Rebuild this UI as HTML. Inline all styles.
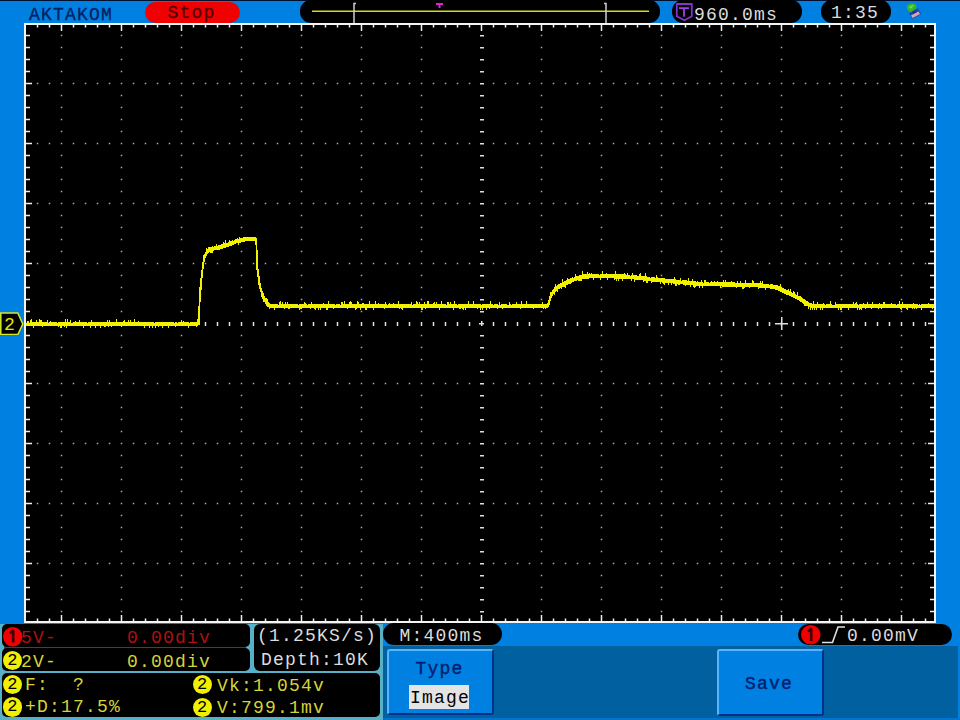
<!DOCTYPE html>
<html><head><meta charset="utf-8"><style>
html,body{margin:0;padding:0}
body{width:960px;height:720px;position:relative;overflow:hidden;background:#0080e0;font-family:"Liberation Mono",monospace}
.a{position:absolute}
.t{position:absolute;font-size:18px;letter-spacing:1.2px;line-height:20px;white-space:pre}
.pill{position:absolute;background:#000;}
.c{position:absolute;border-radius:50%;text-align:center;color:#000;font-family:"Liberation Mono",monospace}
</style></head><body>
<div class="a" style="left:0;top:0;width:960px;height:1px;background:#001030"></div>
<div class="t" style="left:29px;top:5px;color:#002060;-webkit-text-stroke:0.3px #002060">AKTAKOM</div>
<div class="pill" style="left:144.5px;top:1.5px;width:95.5px;height:21.5px;border-radius:11px;background:#f00000"></div>
<div class="t" style="left:167.5px;top:3px;color:#500000;-webkit-text-stroke:0.3px #500000">Stop</div>
<div class="pill" style="left:300px;top:0;width:360px;height:22.5px;border-radius:11px"></div>
<div class="pill" style="left:672px;top:0;width:130px;height:22.5px;border-radius:11px"></div>
<div class="pill" style="left:821px;top:0;width:70px;height:22.5px;border-radius:11px"></div>
<svg width="960" height="720" style="position:absolute;left:0;top:0">
<rect x="24" y="23" width="912" height="600" fill="#f4f4f4"/>
<rect x="26" y="25" width="908" height="596" fill="#000"/>
<path d="M60.75 34.75h1.5v1.5h-1.5zM60.75 46.75h1.5v1.5h-1.5zM60.75 58.75h1.5v1.5h-1.5zM60.75 70.75h1.5v1.5h-1.5zM60.75 82.75h1.5v1.5h-1.5zM60.75 94.75h1.5v1.5h-1.5zM60.75 106.75h1.5v1.5h-1.5zM60.75 118.75h1.5v1.5h-1.5zM60.75 130.75h1.5v1.5h-1.5zM60.75 142.75h1.5v1.5h-1.5zM60.75 154.75h1.5v1.5h-1.5zM60.75 166.75h1.5v1.5h-1.5zM60.75 178.75h1.5v1.5h-1.5zM60.75 190.75h1.5v1.5h-1.5zM60.75 202.75h1.5v1.5h-1.5zM60.75 214.75h1.5v1.5h-1.5zM60.75 226.75h1.5v1.5h-1.5zM60.75 238.75h1.5v1.5h-1.5zM60.75 250.75h1.5v1.5h-1.5zM60.75 262.75h1.5v1.5h-1.5zM60.75 274.75h1.5v1.5h-1.5zM60.75 286.75h1.5v1.5h-1.5zM60.75 298.75h1.5v1.5h-1.5zM60.75 310.75h1.5v1.5h-1.5zM60.75 334.75h1.5v1.5h-1.5zM60.75 346.75h1.5v1.5h-1.5zM60.75 358.75h1.5v1.5h-1.5zM60.75 370.75h1.5v1.5h-1.5zM60.75 382.75h1.5v1.5h-1.5zM60.75 394.75h1.5v1.5h-1.5zM60.75 406.75h1.5v1.5h-1.5zM60.75 418.75h1.5v1.5h-1.5zM60.75 430.75h1.5v1.5h-1.5zM60.75 442.75h1.5v1.5h-1.5zM60.75 454.75h1.5v1.5h-1.5zM60.75 466.75h1.5v1.5h-1.5zM60.75 478.75h1.5v1.5h-1.5zM60.75 490.75h1.5v1.5h-1.5zM60.75 502.75h1.5v1.5h-1.5zM60.75 514.75h1.5v1.5h-1.5zM60.75 526.75h1.5v1.5h-1.5zM60.75 538.75h1.5v1.5h-1.5zM60.75 550.75h1.5v1.5h-1.5zM60.75 562.75h1.5v1.5h-1.5zM60.75 574.75h1.5v1.5h-1.5zM60.75 586.75h1.5v1.5h-1.5zM60.75 598.75h1.5v1.5h-1.5zM60.75 610.75h1.5v1.5h-1.5zM120.75 34.75h1.5v1.5h-1.5zM120.75 46.75h1.5v1.5h-1.5zM120.75 58.75h1.5v1.5h-1.5zM120.75 70.75h1.5v1.5h-1.5zM120.75 82.75h1.5v1.5h-1.5zM120.75 94.75h1.5v1.5h-1.5zM120.75 106.75h1.5v1.5h-1.5zM120.75 118.75h1.5v1.5h-1.5zM120.75 130.75h1.5v1.5h-1.5zM120.75 142.75h1.5v1.5h-1.5zM120.75 154.75h1.5v1.5h-1.5zM120.75 166.75h1.5v1.5h-1.5zM120.75 178.75h1.5v1.5h-1.5zM120.75 190.75h1.5v1.5h-1.5zM120.75 202.75h1.5v1.5h-1.5zM120.75 214.75h1.5v1.5h-1.5zM120.75 226.75h1.5v1.5h-1.5zM120.75 238.75h1.5v1.5h-1.5zM120.75 250.75h1.5v1.5h-1.5zM120.75 262.75h1.5v1.5h-1.5zM120.75 274.75h1.5v1.5h-1.5zM120.75 286.75h1.5v1.5h-1.5zM120.75 298.75h1.5v1.5h-1.5zM120.75 310.75h1.5v1.5h-1.5zM120.75 334.75h1.5v1.5h-1.5zM120.75 346.75h1.5v1.5h-1.5zM120.75 358.75h1.5v1.5h-1.5zM120.75 370.75h1.5v1.5h-1.5zM120.75 382.75h1.5v1.5h-1.5zM120.75 394.75h1.5v1.5h-1.5zM120.75 406.75h1.5v1.5h-1.5zM120.75 418.75h1.5v1.5h-1.5zM120.75 430.75h1.5v1.5h-1.5zM120.75 442.75h1.5v1.5h-1.5zM120.75 454.75h1.5v1.5h-1.5zM120.75 466.75h1.5v1.5h-1.5zM120.75 478.75h1.5v1.5h-1.5zM120.75 490.75h1.5v1.5h-1.5zM120.75 502.75h1.5v1.5h-1.5zM120.75 514.75h1.5v1.5h-1.5zM120.75 526.75h1.5v1.5h-1.5zM120.75 538.75h1.5v1.5h-1.5zM120.75 550.75h1.5v1.5h-1.5zM120.75 562.75h1.5v1.5h-1.5zM120.75 574.75h1.5v1.5h-1.5zM120.75 586.75h1.5v1.5h-1.5zM120.75 598.75h1.5v1.5h-1.5zM120.75 610.75h1.5v1.5h-1.5zM180.75 34.75h1.5v1.5h-1.5zM180.75 46.75h1.5v1.5h-1.5zM180.75 58.75h1.5v1.5h-1.5zM180.75 70.75h1.5v1.5h-1.5zM180.75 82.75h1.5v1.5h-1.5zM180.75 94.75h1.5v1.5h-1.5zM180.75 106.75h1.5v1.5h-1.5zM180.75 118.75h1.5v1.5h-1.5zM180.75 130.75h1.5v1.5h-1.5zM180.75 142.75h1.5v1.5h-1.5zM180.75 154.75h1.5v1.5h-1.5zM180.75 166.75h1.5v1.5h-1.5zM180.75 178.75h1.5v1.5h-1.5zM180.75 190.75h1.5v1.5h-1.5zM180.75 202.75h1.5v1.5h-1.5zM180.75 214.75h1.5v1.5h-1.5zM180.75 226.75h1.5v1.5h-1.5zM180.75 238.75h1.5v1.5h-1.5zM180.75 250.75h1.5v1.5h-1.5zM180.75 262.75h1.5v1.5h-1.5zM180.75 274.75h1.5v1.5h-1.5zM180.75 286.75h1.5v1.5h-1.5zM180.75 298.75h1.5v1.5h-1.5zM180.75 310.75h1.5v1.5h-1.5zM180.75 334.75h1.5v1.5h-1.5zM180.75 346.75h1.5v1.5h-1.5zM180.75 358.75h1.5v1.5h-1.5zM180.75 370.75h1.5v1.5h-1.5zM180.75 382.75h1.5v1.5h-1.5zM180.75 394.75h1.5v1.5h-1.5zM180.75 406.75h1.5v1.5h-1.5zM180.75 418.75h1.5v1.5h-1.5zM180.75 430.75h1.5v1.5h-1.5zM180.75 442.75h1.5v1.5h-1.5zM180.75 454.75h1.5v1.5h-1.5zM180.75 466.75h1.5v1.5h-1.5zM180.75 478.75h1.5v1.5h-1.5zM180.75 490.75h1.5v1.5h-1.5zM180.75 502.75h1.5v1.5h-1.5zM180.75 514.75h1.5v1.5h-1.5zM180.75 526.75h1.5v1.5h-1.5zM180.75 538.75h1.5v1.5h-1.5zM180.75 550.75h1.5v1.5h-1.5zM180.75 562.75h1.5v1.5h-1.5zM180.75 574.75h1.5v1.5h-1.5zM180.75 586.75h1.5v1.5h-1.5zM180.75 598.75h1.5v1.5h-1.5zM180.75 610.75h1.5v1.5h-1.5zM240.75 34.75h1.5v1.5h-1.5zM240.75 46.75h1.5v1.5h-1.5zM240.75 58.75h1.5v1.5h-1.5zM240.75 70.75h1.5v1.5h-1.5zM240.75 82.75h1.5v1.5h-1.5zM240.75 94.75h1.5v1.5h-1.5zM240.75 106.75h1.5v1.5h-1.5zM240.75 118.75h1.5v1.5h-1.5zM240.75 130.75h1.5v1.5h-1.5zM240.75 142.75h1.5v1.5h-1.5zM240.75 154.75h1.5v1.5h-1.5zM240.75 166.75h1.5v1.5h-1.5zM240.75 178.75h1.5v1.5h-1.5zM240.75 190.75h1.5v1.5h-1.5zM240.75 202.75h1.5v1.5h-1.5zM240.75 214.75h1.5v1.5h-1.5zM240.75 226.75h1.5v1.5h-1.5zM240.75 238.75h1.5v1.5h-1.5zM240.75 250.75h1.5v1.5h-1.5zM240.75 262.75h1.5v1.5h-1.5zM240.75 274.75h1.5v1.5h-1.5zM240.75 286.75h1.5v1.5h-1.5zM240.75 298.75h1.5v1.5h-1.5zM240.75 310.75h1.5v1.5h-1.5zM240.75 334.75h1.5v1.5h-1.5zM240.75 346.75h1.5v1.5h-1.5zM240.75 358.75h1.5v1.5h-1.5zM240.75 370.75h1.5v1.5h-1.5zM240.75 382.75h1.5v1.5h-1.5zM240.75 394.75h1.5v1.5h-1.5zM240.75 406.75h1.5v1.5h-1.5zM240.75 418.75h1.5v1.5h-1.5zM240.75 430.75h1.5v1.5h-1.5zM240.75 442.75h1.5v1.5h-1.5zM240.75 454.75h1.5v1.5h-1.5zM240.75 466.75h1.5v1.5h-1.5zM240.75 478.75h1.5v1.5h-1.5zM240.75 490.75h1.5v1.5h-1.5zM240.75 502.75h1.5v1.5h-1.5zM240.75 514.75h1.5v1.5h-1.5zM240.75 526.75h1.5v1.5h-1.5zM240.75 538.75h1.5v1.5h-1.5zM240.75 550.75h1.5v1.5h-1.5zM240.75 562.75h1.5v1.5h-1.5zM240.75 574.75h1.5v1.5h-1.5zM240.75 586.75h1.5v1.5h-1.5zM240.75 598.75h1.5v1.5h-1.5zM240.75 610.75h1.5v1.5h-1.5zM300.75 34.75h1.5v1.5h-1.5zM300.75 46.75h1.5v1.5h-1.5zM300.75 58.75h1.5v1.5h-1.5zM300.75 70.75h1.5v1.5h-1.5zM300.75 82.75h1.5v1.5h-1.5zM300.75 94.75h1.5v1.5h-1.5zM300.75 106.75h1.5v1.5h-1.5zM300.75 118.75h1.5v1.5h-1.5zM300.75 130.75h1.5v1.5h-1.5zM300.75 142.75h1.5v1.5h-1.5zM300.75 154.75h1.5v1.5h-1.5zM300.75 166.75h1.5v1.5h-1.5zM300.75 178.75h1.5v1.5h-1.5zM300.75 190.75h1.5v1.5h-1.5zM300.75 202.75h1.5v1.5h-1.5zM300.75 214.75h1.5v1.5h-1.5zM300.75 226.75h1.5v1.5h-1.5zM300.75 238.75h1.5v1.5h-1.5zM300.75 250.75h1.5v1.5h-1.5zM300.75 262.75h1.5v1.5h-1.5zM300.75 274.75h1.5v1.5h-1.5zM300.75 286.75h1.5v1.5h-1.5zM300.75 298.75h1.5v1.5h-1.5zM300.75 310.75h1.5v1.5h-1.5zM300.75 334.75h1.5v1.5h-1.5zM300.75 346.75h1.5v1.5h-1.5zM300.75 358.75h1.5v1.5h-1.5zM300.75 370.75h1.5v1.5h-1.5zM300.75 382.75h1.5v1.5h-1.5zM300.75 394.75h1.5v1.5h-1.5zM300.75 406.75h1.5v1.5h-1.5zM300.75 418.75h1.5v1.5h-1.5zM300.75 430.75h1.5v1.5h-1.5zM300.75 442.75h1.5v1.5h-1.5zM300.75 454.75h1.5v1.5h-1.5zM300.75 466.75h1.5v1.5h-1.5zM300.75 478.75h1.5v1.5h-1.5zM300.75 490.75h1.5v1.5h-1.5zM300.75 502.75h1.5v1.5h-1.5zM300.75 514.75h1.5v1.5h-1.5zM300.75 526.75h1.5v1.5h-1.5zM300.75 538.75h1.5v1.5h-1.5zM300.75 550.75h1.5v1.5h-1.5zM300.75 562.75h1.5v1.5h-1.5zM300.75 574.75h1.5v1.5h-1.5zM300.75 586.75h1.5v1.5h-1.5zM300.75 598.75h1.5v1.5h-1.5zM300.75 610.75h1.5v1.5h-1.5zM360.75 34.75h1.5v1.5h-1.5zM360.75 46.75h1.5v1.5h-1.5zM360.75 58.75h1.5v1.5h-1.5zM360.75 70.75h1.5v1.5h-1.5zM360.75 82.75h1.5v1.5h-1.5zM360.75 94.75h1.5v1.5h-1.5zM360.75 106.75h1.5v1.5h-1.5zM360.75 118.75h1.5v1.5h-1.5zM360.75 130.75h1.5v1.5h-1.5zM360.75 142.75h1.5v1.5h-1.5zM360.75 154.75h1.5v1.5h-1.5zM360.75 166.75h1.5v1.5h-1.5zM360.75 178.75h1.5v1.5h-1.5zM360.75 190.75h1.5v1.5h-1.5zM360.75 202.75h1.5v1.5h-1.5zM360.75 214.75h1.5v1.5h-1.5zM360.75 226.75h1.5v1.5h-1.5zM360.75 238.75h1.5v1.5h-1.5zM360.75 250.75h1.5v1.5h-1.5zM360.75 262.75h1.5v1.5h-1.5zM360.75 274.75h1.5v1.5h-1.5zM360.75 286.75h1.5v1.5h-1.5zM360.75 298.75h1.5v1.5h-1.5zM360.75 310.75h1.5v1.5h-1.5zM360.75 334.75h1.5v1.5h-1.5zM360.75 346.75h1.5v1.5h-1.5zM360.75 358.75h1.5v1.5h-1.5zM360.75 370.75h1.5v1.5h-1.5zM360.75 382.75h1.5v1.5h-1.5zM360.75 394.75h1.5v1.5h-1.5zM360.75 406.75h1.5v1.5h-1.5zM360.75 418.75h1.5v1.5h-1.5zM360.75 430.75h1.5v1.5h-1.5zM360.75 442.75h1.5v1.5h-1.5zM360.75 454.75h1.5v1.5h-1.5zM360.75 466.75h1.5v1.5h-1.5zM360.75 478.75h1.5v1.5h-1.5zM360.75 490.75h1.5v1.5h-1.5zM360.75 502.75h1.5v1.5h-1.5zM360.75 514.75h1.5v1.5h-1.5zM360.75 526.75h1.5v1.5h-1.5zM360.75 538.75h1.5v1.5h-1.5zM360.75 550.75h1.5v1.5h-1.5zM360.75 562.75h1.5v1.5h-1.5zM360.75 574.75h1.5v1.5h-1.5zM360.75 586.75h1.5v1.5h-1.5zM360.75 598.75h1.5v1.5h-1.5zM360.75 610.75h1.5v1.5h-1.5zM420.75 34.75h1.5v1.5h-1.5zM420.75 46.75h1.5v1.5h-1.5zM420.75 58.75h1.5v1.5h-1.5zM420.75 70.75h1.5v1.5h-1.5zM420.75 82.75h1.5v1.5h-1.5zM420.75 94.75h1.5v1.5h-1.5zM420.75 106.75h1.5v1.5h-1.5zM420.75 118.75h1.5v1.5h-1.5zM420.75 130.75h1.5v1.5h-1.5zM420.75 142.75h1.5v1.5h-1.5zM420.75 154.75h1.5v1.5h-1.5zM420.75 166.75h1.5v1.5h-1.5zM420.75 178.75h1.5v1.5h-1.5zM420.75 190.75h1.5v1.5h-1.5zM420.75 202.75h1.5v1.5h-1.5zM420.75 214.75h1.5v1.5h-1.5zM420.75 226.75h1.5v1.5h-1.5zM420.75 238.75h1.5v1.5h-1.5zM420.75 250.75h1.5v1.5h-1.5zM420.75 262.75h1.5v1.5h-1.5zM420.75 274.75h1.5v1.5h-1.5zM420.75 286.75h1.5v1.5h-1.5zM420.75 298.75h1.5v1.5h-1.5zM420.75 310.75h1.5v1.5h-1.5zM420.75 334.75h1.5v1.5h-1.5zM420.75 346.75h1.5v1.5h-1.5zM420.75 358.75h1.5v1.5h-1.5zM420.75 370.75h1.5v1.5h-1.5zM420.75 382.75h1.5v1.5h-1.5zM420.75 394.75h1.5v1.5h-1.5zM420.75 406.75h1.5v1.5h-1.5zM420.75 418.75h1.5v1.5h-1.5zM420.75 430.75h1.5v1.5h-1.5zM420.75 442.75h1.5v1.5h-1.5zM420.75 454.75h1.5v1.5h-1.5zM420.75 466.75h1.5v1.5h-1.5zM420.75 478.75h1.5v1.5h-1.5zM420.75 490.75h1.5v1.5h-1.5zM420.75 502.75h1.5v1.5h-1.5zM420.75 514.75h1.5v1.5h-1.5zM420.75 526.75h1.5v1.5h-1.5zM420.75 538.75h1.5v1.5h-1.5zM420.75 550.75h1.5v1.5h-1.5zM420.75 562.75h1.5v1.5h-1.5zM420.75 574.75h1.5v1.5h-1.5zM420.75 586.75h1.5v1.5h-1.5zM420.75 598.75h1.5v1.5h-1.5zM420.75 610.75h1.5v1.5h-1.5zM540.75 34.75h1.5v1.5h-1.5zM540.75 46.75h1.5v1.5h-1.5zM540.75 58.75h1.5v1.5h-1.5zM540.75 70.75h1.5v1.5h-1.5zM540.75 82.75h1.5v1.5h-1.5zM540.75 94.75h1.5v1.5h-1.5zM540.75 106.75h1.5v1.5h-1.5zM540.75 118.75h1.5v1.5h-1.5zM540.75 130.75h1.5v1.5h-1.5zM540.75 142.75h1.5v1.5h-1.5zM540.75 154.75h1.5v1.5h-1.5zM540.75 166.75h1.5v1.5h-1.5zM540.75 178.75h1.5v1.5h-1.5zM540.75 190.75h1.5v1.5h-1.5zM540.75 202.75h1.5v1.5h-1.5zM540.75 214.75h1.5v1.5h-1.5zM540.75 226.75h1.5v1.5h-1.5zM540.75 238.75h1.5v1.5h-1.5zM540.75 250.75h1.5v1.5h-1.5zM540.75 262.75h1.5v1.5h-1.5zM540.75 274.75h1.5v1.5h-1.5zM540.75 286.75h1.5v1.5h-1.5zM540.75 298.75h1.5v1.5h-1.5zM540.75 310.75h1.5v1.5h-1.5zM540.75 334.75h1.5v1.5h-1.5zM540.75 346.75h1.5v1.5h-1.5zM540.75 358.75h1.5v1.5h-1.5zM540.75 370.75h1.5v1.5h-1.5zM540.75 382.75h1.5v1.5h-1.5zM540.75 394.75h1.5v1.5h-1.5zM540.75 406.75h1.5v1.5h-1.5zM540.75 418.75h1.5v1.5h-1.5zM540.75 430.75h1.5v1.5h-1.5zM540.75 442.75h1.5v1.5h-1.5zM540.75 454.75h1.5v1.5h-1.5zM540.75 466.75h1.5v1.5h-1.5zM540.75 478.75h1.5v1.5h-1.5zM540.75 490.75h1.5v1.5h-1.5zM540.75 502.75h1.5v1.5h-1.5zM540.75 514.75h1.5v1.5h-1.5zM540.75 526.75h1.5v1.5h-1.5zM540.75 538.75h1.5v1.5h-1.5zM540.75 550.75h1.5v1.5h-1.5zM540.75 562.75h1.5v1.5h-1.5zM540.75 574.75h1.5v1.5h-1.5zM540.75 586.75h1.5v1.5h-1.5zM540.75 598.75h1.5v1.5h-1.5zM540.75 610.75h1.5v1.5h-1.5zM600.75 34.75h1.5v1.5h-1.5zM600.75 46.75h1.5v1.5h-1.5zM600.75 58.75h1.5v1.5h-1.5zM600.75 70.75h1.5v1.5h-1.5zM600.75 82.75h1.5v1.5h-1.5zM600.75 94.75h1.5v1.5h-1.5zM600.75 106.75h1.5v1.5h-1.5zM600.75 118.75h1.5v1.5h-1.5zM600.75 130.75h1.5v1.5h-1.5zM600.75 142.75h1.5v1.5h-1.5zM600.75 154.75h1.5v1.5h-1.5zM600.75 166.75h1.5v1.5h-1.5zM600.75 178.75h1.5v1.5h-1.5zM600.75 190.75h1.5v1.5h-1.5zM600.75 202.75h1.5v1.5h-1.5zM600.75 214.75h1.5v1.5h-1.5zM600.75 226.75h1.5v1.5h-1.5zM600.75 238.75h1.5v1.5h-1.5zM600.75 250.75h1.5v1.5h-1.5zM600.75 262.75h1.5v1.5h-1.5zM600.75 274.75h1.5v1.5h-1.5zM600.75 286.75h1.5v1.5h-1.5zM600.75 298.75h1.5v1.5h-1.5zM600.75 310.75h1.5v1.5h-1.5zM600.75 334.75h1.5v1.5h-1.5zM600.75 346.75h1.5v1.5h-1.5zM600.75 358.75h1.5v1.5h-1.5zM600.75 370.75h1.5v1.5h-1.5zM600.75 382.75h1.5v1.5h-1.5zM600.75 394.75h1.5v1.5h-1.5zM600.75 406.75h1.5v1.5h-1.5zM600.75 418.75h1.5v1.5h-1.5zM600.75 430.75h1.5v1.5h-1.5zM600.75 442.75h1.5v1.5h-1.5zM600.75 454.75h1.5v1.5h-1.5zM600.75 466.75h1.5v1.5h-1.5zM600.75 478.75h1.5v1.5h-1.5zM600.75 490.75h1.5v1.5h-1.5zM600.75 502.75h1.5v1.5h-1.5zM600.75 514.75h1.5v1.5h-1.5zM600.75 526.75h1.5v1.5h-1.5zM600.75 538.75h1.5v1.5h-1.5zM600.75 550.75h1.5v1.5h-1.5zM600.75 562.75h1.5v1.5h-1.5zM600.75 574.75h1.5v1.5h-1.5zM600.75 586.75h1.5v1.5h-1.5zM600.75 598.75h1.5v1.5h-1.5zM600.75 610.75h1.5v1.5h-1.5zM660.75 34.75h1.5v1.5h-1.5zM660.75 46.75h1.5v1.5h-1.5zM660.75 58.75h1.5v1.5h-1.5zM660.75 70.75h1.5v1.5h-1.5zM660.75 82.75h1.5v1.5h-1.5zM660.75 94.75h1.5v1.5h-1.5zM660.75 106.75h1.5v1.5h-1.5zM660.75 118.75h1.5v1.5h-1.5zM660.75 130.75h1.5v1.5h-1.5zM660.75 142.75h1.5v1.5h-1.5zM660.75 154.75h1.5v1.5h-1.5zM660.75 166.75h1.5v1.5h-1.5zM660.75 178.75h1.5v1.5h-1.5zM660.75 190.75h1.5v1.5h-1.5zM660.75 202.75h1.5v1.5h-1.5zM660.75 214.75h1.5v1.5h-1.5zM660.75 226.75h1.5v1.5h-1.5zM660.75 238.75h1.5v1.5h-1.5zM660.75 250.75h1.5v1.5h-1.5zM660.75 262.75h1.5v1.5h-1.5zM660.75 274.75h1.5v1.5h-1.5zM660.75 286.75h1.5v1.5h-1.5zM660.75 298.75h1.5v1.5h-1.5zM660.75 310.75h1.5v1.5h-1.5zM660.75 334.75h1.5v1.5h-1.5zM660.75 346.75h1.5v1.5h-1.5zM660.75 358.75h1.5v1.5h-1.5zM660.75 370.75h1.5v1.5h-1.5zM660.75 382.75h1.5v1.5h-1.5zM660.75 394.75h1.5v1.5h-1.5zM660.75 406.75h1.5v1.5h-1.5zM660.75 418.75h1.5v1.5h-1.5zM660.75 430.75h1.5v1.5h-1.5zM660.75 442.75h1.5v1.5h-1.5zM660.75 454.75h1.5v1.5h-1.5zM660.75 466.75h1.5v1.5h-1.5zM660.75 478.75h1.5v1.5h-1.5zM660.75 490.75h1.5v1.5h-1.5zM660.75 502.75h1.5v1.5h-1.5zM660.75 514.75h1.5v1.5h-1.5zM660.75 526.75h1.5v1.5h-1.5zM660.75 538.75h1.5v1.5h-1.5zM660.75 550.75h1.5v1.5h-1.5zM660.75 562.75h1.5v1.5h-1.5zM660.75 574.75h1.5v1.5h-1.5zM660.75 586.75h1.5v1.5h-1.5zM660.75 598.75h1.5v1.5h-1.5zM660.75 610.75h1.5v1.5h-1.5zM720.75 34.75h1.5v1.5h-1.5zM720.75 46.75h1.5v1.5h-1.5zM720.75 58.75h1.5v1.5h-1.5zM720.75 70.75h1.5v1.5h-1.5zM720.75 82.75h1.5v1.5h-1.5zM720.75 94.75h1.5v1.5h-1.5zM720.75 106.75h1.5v1.5h-1.5zM720.75 118.75h1.5v1.5h-1.5zM720.75 130.75h1.5v1.5h-1.5zM720.75 142.75h1.5v1.5h-1.5zM720.75 154.75h1.5v1.5h-1.5zM720.75 166.75h1.5v1.5h-1.5zM720.75 178.75h1.5v1.5h-1.5zM720.75 190.75h1.5v1.5h-1.5zM720.75 202.75h1.5v1.5h-1.5zM720.75 214.75h1.5v1.5h-1.5zM720.75 226.75h1.5v1.5h-1.5zM720.75 238.75h1.5v1.5h-1.5zM720.75 250.75h1.5v1.5h-1.5zM720.75 262.75h1.5v1.5h-1.5zM720.75 274.75h1.5v1.5h-1.5zM720.75 286.75h1.5v1.5h-1.5zM720.75 298.75h1.5v1.5h-1.5zM720.75 310.75h1.5v1.5h-1.5zM720.75 334.75h1.5v1.5h-1.5zM720.75 346.75h1.5v1.5h-1.5zM720.75 358.75h1.5v1.5h-1.5zM720.75 370.75h1.5v1.5h-1.5zM720.75 382.75h1.5v1.5h-1.5zM720.75 394.75h1.5v1.5h-1.5zM720.75 406.75h1.5v1.5h-1.5zM720.75 418.75h1.5v1.5h-1.5zM720.75 430.75h1.5v1.5h-1.5zM720.75 442.75h1.5v1.5h-1.5zM720.75 454.75h1.5v1.5h-1.5zM720.75 466.75h1.5v1.5h-1.5zM720.75 478.75h1.5v1.5h-1.5zM720.75 490.75h1.5v1.5h-1.5zM720.75 502.75h1.5v1.5h-1.5zM720.75 514.75h1.5v1.5h-1.5zM720.75 526.75h1.5v1.5h-1.5zM720.75 538.75h1.5v1.5h-1.5zM720.75 550.75h1.5v1.5h-1.5zM720.75 562.75h1.5v1.5h-1.5zM720.75 574.75h1.5v1.5h-1.5zM720.75 586.75h1.5v1.5h-1.5zM720.75 598.75h1.5v1.5h-1.5zM720.75 610.75h1.5v1.5h-1.5zM780.75 34.75h1.5v1.5h-1.5zM780.75 46.75h1.5v1.5h-1.5zM780.75 58.75h1.5v1.5h-1.5zM780.75 70.75h1.5v1.5h-1.5zM780.75 82.75h1.5v1.5h-1.5zM780.75 94.75h1.5v1.5h-1.5zM780.75 106.75h1.5v1.5h-1.5zM780.75 118.75h1.5v1.5h-1.5zM780.75 130.75h1.5v1.5h-1.5zM780.75 142.75h1.5v1.5h-1.5zM780.75 154.75h1.5v1.5h-1.5zM780.75 166.75h1.5v1.5h-1.5zM780.75 178.75h1.5v1.5h-1.5zM780.75 190.75h1.5v1.5h-1.5zM780.75 202.75h1.5v1.5h-1.5zM780.75 214.75h1.5v1.5h-1.5zM780.75 226.75h1.5v1.5h-1.5zM780.75 238.75h1.5v1.5h-1.5zM780.75 250.75h1.5v1.5h-1.5zM780.75 262.75h1.5v1.5h-1.5zM780.75 274.75h1.5v1.5h-1.5zM780.75 286.75h1.5v1.5h-1.5zM780.75 298.75h1.5v1.5h-1.5zM780.75 310.75h1.5v1.5h-1.5zM780.75 334.75h1.5v1.5h-1.5zM780.75 346.75h1.5v1.5h-1.5zM780.75 358.75h1.5v1.5h-1.5zM780.75 370.75h1.5v1.5h-1.5zM780.75 382.75h1.5v1.5h-1.5zM780.75 394.75h1.5v1.5h-1.5zM780.75 406.75h1.5v1.5h-1.5zM780.75 418.75h1.5v1.5h-1.5zM780.75 430.75h1.5v1.5h-1.5zM780.75 442.75h1.5v1.5h-1.5zM780.75 454.75h1.5v1.5h-1.5zM780.75 466.75h1.5v1.5h-1.5zM780.75 478.75h1.5v1.5h-1.5zM780.75 490.75h1.5v1.5h-1.5zM780.75 502.75h1.5v1.5h-1.5zM780.75 514.75h1.5v1.5h-1.5zM780.75 526.75h1.5v1.5h-1.5zM780.75 538.75h1.5v1.5h-1.5zM780.75 550.75h1.5v1.5h-1.5zM780.75 562.75h1.5v1.5h-1.5zM780.75 574.75h1.5v1.5h-1.5zM780.75 586.75h1.5v1.5h-1.5zM780.75 598.75h1.5v1.5h-1.5zM780.75 610.75h1.5v1.5h-1.5zM840.75 34.75h1.5v1.5h-1.5zM840.75 46.75h1.5v1.5h-1.5zM840.75 58.75h1.5v1.5h-1.5zM840.75 70.75h1.5v1.5h-1.5zM840.75 82.75h1.5v1.5h-1.5zM840.75 94.75h1.5v1.5h-1.5zM840.75 106.75h1.5v1.5h-1.5zM840.75 118.75h1.5v1.5h-1.5zM840.75 130.75h1.5v1.5h-1.5zM840.75 142.75h1.5v1.5h-1.5zM840.75 154.75h1.5v1.5h-1.5zM840.75 166.75h1.5v1.5h-1.5zM840.75 178.75h1.5v1.5h-1.5zM840.75 190.75h1.5v1.5h-1.5zM840.75 202.75h1.5v1.5h-1.5zM840.75 214.75h1.5v1.5h-1.5zM840.75 226.75h1.5v1.5h-1.5zM840.75 238.75h1.5v1.5h-1.5zM840.75 250.75h1.5v1.5h-1.5zM840.75 262.75h1.5v1.5h-1.5zM840.75 274.75h1.5v1.5h-1.5zM840.75 286.75h1.5v1.5h-1.5zM840.75 298.75h1.5v1.5h-1.5zM840.75 310.75h1.5v1.5h-1.5zM840.75 334.75h1.5v1.5h-1.5zM840.75 346.75h1.5v1.5h-1.5zM840.75 358.75h1.5v1.5h-1.5zM840.75 370.75h1.5v1.5h-1.5zM840.75 382.75h1.5v1.5h-1.5zM840.75 394.75h1.5v1.5h-1.5zM840.75 406.75h1.5v1.5h-1.5zM840.75 418.75h1.5v1.5h-1.5zM840.75 430.75h1.5v1.5h-1.5zM840.75 442.75h1.5v1.5h-1.5zM840.75 454.75h1.5v1.5h-1.5zM840.75 466.75h1.5v1.5h-1.5zM840.75 478.75h1.5v1.5h-1.5zM840.75 490.75h1.5v1.5h-1.5zM840.75 502.75h1.5v1.5h-1.5zM840.75 514.75h1.5v1.5h-1.5zM840.75 526.75h1.5v1.5h-1.5zM840.75 538.75h1.5v1.5h-1.5zM840.75 550.75h1.5v1.5h-1.5zM840.75 562.75h1.5v1.5h-1.5zM840.75 574.75h1.5v1.5h-1.5zM840.75 586.75h1.5v1.5h-1.5zM840.75 598.75h1.5v1.5h-1.5zM840.75 610.75h1.5v1.5h-1.5zM900.75 34.75h1.5v1.5h-1.5zM900.75 46.75h1.5v1.5h-1.5zM900.75 58.75h1.5v1.5h-1.5zM900.75 70.75h1.5v1.5h-1.5zM900.75 82.75h1.5v1.5h-1.5zM900.75 94.75h1.5v1.5h-1.5zM900.75 106.75h1.5v1.5h-1.5zM900.75 118.75h1.5v1.5h-1.5zM900.75 130.75h1.5v1.5h-1.5zM900.75 142.75h1.5v1.5h-1.5zM900.75 154.75h1.5v1.5h-1.5zM900.75 166.75h1.5v1.5h-1.5zM900.75 178.75h1.5v1.5h-1.5zM900.75 190.75h1.5v1.5h-1.5zM900.75 202.75h1.5v1.5h-1.5zM900.75 214.75h1.5v1.5h-1.5zM900.75 226.75h1.5v1.5h-1.5zM900.75 238.75h1.5v1.5h-1.5zM900.75 250.75h1.5v1.5h-1.5zM900.75 262.75h1.5v1.5h-1.5zM900.75 274.75h1.5v1.5h-1.5zM900.75 286.75h1.5v1.5h-1.5zM900.75 298.75h1.5v1.5h-1.5zM900.75 310.75h1.5v1.5h-1.5zM900.75 334.75h1.5v1.5h-1.5zM900.75 346.75h1.5v1.5h-1.5zM900.75 358.75h1.5v1.5h-1.5zM900.75 370.75h1.5v1.5h-1.5zM900.75 382.75h1.5v1.5h-1.5zM900.75 394.75h1.5v1.5h-1.5zM900.75 406.75h1.5v1.5h-1.5zM900.75 418.75h1.5v1.5h-1.5zM900.75 430.75h1.5v1.5h-1.5zM900.75 442.75h1.5v1.5h-1.5zM900.75 454.75h1.5v1.5h-1.5zM900.75 466.75h1.5v1.5h-1.5zM900.75 478.75h1.5v1.5h-1.5zM900.75 490.75h1.5v1.5h-1.5zM900.75 502.75h1.5v1.5h-1.5zM900.75 514.75h1.5v1.5h-1.5zM900.75 526.75h1.5v1.5h-1.5zM900.75 538.75h1.5v1.5h-1.5zM900.75 550.75h1.5v1.5h-1.5zM900.75 562.75h1.5v1.5h-1.5zM900.75 574.75h1.5v1.5h-1.5zM900.75 586.75h1.5v1.5h-1.5zM900.75 598.75h1.5v1.5h-1.5zM900.75 610.75h1.5v1.5h-1.5zM36.75 82.75h1.5v1.5h-1.5zM48.75 82.75h1.5v1.5h-1.5zM72.75 82.75h1.5v1.5h-1.5zM84.75 82.75h1.5v1.5h-1.5zM96.75 82.75h1.5v1.5h-1.5zM108.75 82.75h1.5v1.5h-1.5zM132.75 82.75h1.5v1.5h-1.5zM144.75 82.75h1.5v1.5h-1.5zM156.75 82.75h1.5v1.5h-1.5zM168.75 82.75h1.5v1.5h-1.5zM192.75 82.75h1.5v1.5h-1.5zM204.75 82.75h1.5v1.5h-1.5zM216.75 82.75h1.5v1.5h-1.5zM228.75 82.75h1.5v1.5h-1.5zM252.75 82.75h1.5v1.5h-1.5zM264.75 82.75h1.5v1.5h-1.5zM276.75 82.75h1.5v1.5h-1.5zM288.75 82.75h1.5v1.5h-1.5zM312.75 82.75h1.5v1.5h-1.5zM324.75 82.75h1.5v1.5h-1.5zM336.75 82.75h1.5v1.5h-1.5zM348.75 82.75h1.5v1.5h-1.5zM372.75 82.75h1.5v1.5h-1.5zM384.75 82.75h1.5v1.5h-1.5zM396.75 82.75h1.5v1.5h-1.5zM408.75 82.75h1.5v1.5h-1.5zM432.75 82.75h1.5v1.5h-1.5zM444.75 82.75h1.5v1.5h-1.5zM456.75 82.75h1.5v1.5h-1.5zM468.75 82.75h1.5v1.5h-1.5zM492.75 82.75h1.5v1.5h-1.5zM504.75 82.75h1.5v1.5h-1.5zM516.75 82.75h1.5v1.5h-1.5zM528.75 82.75h1.5v1.5h-1.5zM552.75 82.75h1.5v1.5h-1.5zM564.75 82.75h1.5v1.5h-1.5zM576.75 82.75h1.5v1.5h-1.5zM588.75 82.75h1.5v1.5h-1.5zM612.75 82.75h1.5v1.5h-1.5zM624.75 82.75h1.5v1.5h-1.5zM636.75 82.75h1.5v1.5h-1.5zM648.75 82.75h1.5v1.5h-1.5zM672.75 82.75h1.5v1.5h-1.5zM684.75 82.75h1.5v1.5h-1.5zM696.75 82.75h1.5v1.5h-1.5zM708.75 82.75h1.5v1.5h-1.5zM732.75 82.75h1.5v1.5h-1.5zM744.75 82.75h1.5v1.5h-1.5zM756.75 82.75h1.5v1.5h-1.5zM768.75 82.75h1.5v1.5h-1.5zM792.75 82.75h1.5v1.5h-1.5zM804.75 82.75h1.5v1.5h-1.5zM816.75 82.75h1.5v1.5h-1.5zM828.75 82.75h1.5v1.5h-1.5zM852.75 82.75h1.5v1.5h-1.5zM864.75 82.75h1.5v1.5h-1.5zM876.75 82.75h1.5v1.5h-1.5zM888.75 82.75h1.5v1.5h-1.5zM912.75 82.75h1.5v1.5h-1.5zM924.75 82.75h1.5v1.5h-1.5zM36.75 142.75h1.5v1.5h-1.5zM48.75 142.75h1.5v1.5h-1.5zM72.75 142.75h1.5v1.5h-1.5zM84.75 142.75h1.5v1.5h-1.5zM96.75 142.75h1.5v1.5h-1.5zM108.75 142.75h1.5v1.5h-1.5zM132.75 142.75h1.5v1.5h-1.5zM144.75 142.75h1.5v1.5h-1.5zM156.75 142.75h1.5v1.5h-1.5zM168.75 142.75h1.5v1.5h-1.5zM192.75 142.75h1.5v1.5h-1.5zM204.75 142.75h1.5v1.5h-1.5zM216.75 142.75h1.5v1.5h-1.5zM228.75 142.75h1.5v1.5h-1.5zM252.75 142.75h1.5v1.5h-1.5zM264.75 142.75h1.5v1.5h-1.5zM276.75 142.75h1.5v1.5h-1.5zM288.75 142.75h1.5v1.5h-1.5zM312.75 142.75h1.5v1.5h-1.5zM324.75 142.75h1.5v1.5h-1.5zM336.75 142.75h1.5v1.5h-1.5zM348.75 142.75h1.5v1.5h-1.5zM372.75 142.75h1.5v1.5h-1.5zM384.75 142.75h1.5v1.5h-1.5zM396.75 142.75h1.5v1.5h-1.5zM408.75 142.75h1.5v1.5h-1.5zM432.75 142.75h1.5v1.5h-1.5zM444.75 142.75h1.5v1.5h-1.5zM456.75 142.75h1.5v1.5h-1.5zM468.75 142.75h1.5v1.5h-1.5zM492.75 142.75h1.5v1.5h-1.5zM504.75 142.75h1.5v1.5h-1.5zM516.75 142.75h1.5v1.5h-1.5zM528.75 142.75h1.5v1.5h-1.5zM552.75 142.75h1.5v1.5h-1.5zM564.75 142.75h1.5v1.5h-1.5zM576.75 142.75h1.5v1.5h-1.5zM588.75 142.75h1.5v1.5h-1.5zM612.75 142.75h1.5v1.5h-1.5zM624.75 142.75h1.5v1.5h-1.5zM636.75 142.75h1.5v1.5h-1.5zM648.75 142.75h1.5v1.5h-1.5zM672.75 142.75h1.5v1.5h-1.5zM684.75 142.75h1.5v1.5h-1.5zM696.75 142.75h1.5v1.5h-1.5zM708.75 142.75h1.5v1.5h-1.5zM732.75 142.75h1.5v1.5h-1.5zM744.75 142.75h1.5v1.5h-1.5zM756.75 142.75h1.5v1.5h-1.5zM768.75 142.75h1.5v1.5h-1.5zM792.75 142.75h1.5v1.5h-1.5zM804.75 142.75h1.5v1.5h-1.5zM816.75 142.75h1.5v1.5h-1.5zM828.75 142.75h1.5v1.5h-1.5zM852.75 142.75h1.5v1.5h-1.5zM864.75 142.75h1.5v1.5h-1.5zM876.75 142.75h1.5v1.5h-1.5zM888.75 142.75h1.5v1.5h-1.5zM912.75 142.75h1.5v1.5h-1.5zM924.75 142.75h1.5v1.5h-1.5zM36.75 202.75h1.5v1.5h-1.5zM48.75 202.75h1.5v1.5h-1.5zM72.75 202.75h1.5v1.5h-1.5zM84.75 202.75h1.5v1.5h-1.5zM96.75 202.75h1.5v1.5h-1.5zM108.75 202.75h1.5v1.5h-1.5zM132.75 202.75h1.5v1.5h-1.5zM144.75 202.75h1.5v1.5h-1.5zM156.75 202.75h1.5v1.5h-1.5zM168.75 202.75h1.5v1.5h-1.5zM192.75 202.75h1.5v1.5h-1.5zM204.75 202.75h1.5v1.5h-1.5zM216.75 202.75h1.5v1.5h-1.5zM228.75 202.75h1.5v1.5h-1.5zM252.75 202.75h1.5v1.5h-1.5zM264.75 202.75h1.5v1.5h-1.5zM276.75 202.75h1.5v1.5h-1.5zM288.75 202.75h1.5v1.5h-1.5zM312.75 202.75h1.5v1.5h-1.5zM324.75 202.75h1.5v1.5h-1.5zM336.75 202.75h1.5v1.5h-1.5zM348.75 202.75h1.5v1.5h-1.5zM372.75 202.75h1.5v1.5h-1.5zM384.75 202.75h1.5v1.5h-1.5zM396.75 202.75h1.5v1.5h-1.5zM408.75 202.75h1.5v1.5h-1.5zM432.75 202.75h1.5v1.5h-1.5zM444.75 202.75h1.5v1.5h-1.5zM456.75 202.75h1.5v1.5h-1.5zM468.75 202.75h1.5v1.5h-1.5zM492.75 202.75h1.5v1.5h-1.5zM504.75 202.75h1.5v1.5h-1.5zM516.75 202.75h1.5v1.5h-1.5zM528.75 202.75h1.5v1.5h-1.5zM552.75 202.75h1.5v1.5h-1.5zM564.75 202.75h1.5v1.5h-1.5zM576.75 202.75h1.5v1.5h-1.5zM588.75 202.75h1.5v1.5h-1.5zM612.75 202.75h1.5v1.5h-1.5zM624.75 202.75h1.5v1.5h-1.5zM636.75 202.75h1.5v1.5h-1.5zM648.75 202.75h1.5v1.5h-1.5zM672.75 202.75h1.5v1.5h-1.5zM684.75 202.75h1.5v1.5h-1.5zM696.75 202.75h1.5v1.5h-1.5zM708.75 202.75h1.5v1.5h-1.5zM732.75 202.75h1.5v1.5h-1.5zM744.75 202.75h1.5v1.5h-1.5zM756.75 202.75h1.5v1.5h-1.5zM768.75 202.75h1.5v1.5h-1.5zM792.75 202.75h1.5v1.5h-1.5zM804.75 202.75h1.5v1.5h-1.5zM816.75 202.75h1.5v1.5h-1.5zM828.75 202.75h1.5v1.5h-1.5zM852.75 202.75h1.5v1.5h-1.5zM864.75 202.75h1.5v1.5h-1.5zM876.75 202.75h1.5v1.5h-1.5zM888.75 202.75h1.5v1.5h-1.5zM912.75 202.75h1.5v1.5h-1.5zM924.75 202.75h1.5v1.5h-1.5zM36.75 262.75h1.5v1.5h-1.5zM48.75 262.75h1.5v1.5h-1.5zM72.75 262.75h1.5v1.5h-1.5zM84.75 262.75h1.5v1.5h-1.5zM96.75 262.75h1.5v1.5h-1.5zM108.75 262.75h1.5v1.5h-1.5zM132.75 262.75h1.5v1.5h-1.5zM144.75 262.75h1.5v1.5h-1.5zM156.75 262.75h1.5v1.5h-1.5zM168.75 262.75h1.5v1.5h-1.5zM192.75 262.75h1.5v1.5h-1.5zM204.75 262.75h1.5v1.5h-1.5zM216.75 262.75h1.5v1.5h-1.5zM228.75 262.75h1.5v1.5h-1.5zM252.75 262.75h1.5v1.5h-1.5zM264.75 262.75h1.5v1.5h-1.5zM276.75 262.75h1.5v1.5h-1.5zM288.75 262.75h1.5v1.5h-1.5zM312.75 262.75h1.5v1.5h-1.5zM324.75 262.75h1.5v1.5h-1.5zM336.75 262.75h1.5v1.5h-1.5zM348.75 262.75h1.5v1.5h-1.5zM372.75 262.75h1.5v1.5h-1.5zM384.75 262.75h1.5v1.5h-1.5zM396.75 262.75h1.5v1.5h-1.5zM408.75 262.75h1.5v1.5h-1.5zM432.75 262.75h1.5v1.5h-1.5zM444.75 262.75h1.5v1.5h-1.5zM456.75 262.75h1.5v1.5h-1.5zM468.75 262.75h1.5v1.5h-1.5zM492.75 262.75h1.5v1.5h-1.5zM504.75 262.75h1.5v1.5h-1.5zM516.75 262.75h1.5v1.5h-1.5zM528.75 262.75h1.5v1.5h-1.5zM552.75 262.75h1.5v1.5h-1.5zM564.75 262.75h1.5v1.5h-1.5zM576.75 262.75h1.5v1.5h-1.5zM588.75 262.75h1.5v1.5h-1.5zM612.75 262.75h1.5v1.5h-1.5zM624.75 262.75h1.5v1.5h-1.5zM636.75 262.75h1.5v1.5h-1.5zM648.75 262.75h1.5v1.5h-1.5zM672.75 262.75h1.5v1.5h-1.5zM684.75 262.75h1.5v1.5h-1.5zM696.75 262.75h1.5v1.5h-1.5zM708.75 262.75h1.5v1.5h-1.5zM732.75 262.75h1.5v1.5h-1.5zM744.75 262.75h1.5v1.5h-1.5zM756.75 262.75h1.5v1.5h-1.5zM768.75 262.75h1.5v1.5h-1.5zM792.75 262.75h1.5v1.5h-1.5zM804.75 262.75h1.5v1.5h-1.5zM816.75 262.75h1.5v1.5h-1.5zM828.75 262.75h1.5v1.5h-1.5zM852.75 262.75h1.5v1.5h-1.5zM864.75 262.75h1.5v1.5h-1.5zM876.75 262.75h1.5v1.5h-1.5zM888.75 262.75h1.5v1.5h-1.5zM912.75 262.75h1.5v1.5h-1.5zM924.75 262.75h1.5v1.5h-1.5zM36.75 382.75h1.5v1.5h-1.5zM48.75 382.75h1.5v1.5h-1.5zM72.75 382.75h1.5v1.5h-1.5zM84.75 382.75h1.5v1.5h-1.5zM96.75 382.75h1.5v1.5h-1.5zM108.75 382.75h1.5v1.5h-1.5zM132.75 382.75h1.5v1.5h-1.5zM144.75 382.75h1.5v1.5h-1.5zM156.75 382.75h1.5v1.5h-1.5zM168.75 382.75h1.5v1.5h-1.5zM192.75 382.75h1.5v1.5h-1.5zM204.75 382.75h1.5v1.5h-1.5zM216.75 382.75h1.5v1.5h-1.5zM228.75 382.75h1.5v1.5h-1.5zM252.75 382.75h1.5v1.5h-1.5zM264.75 382.75h1.5v1.5h-1.5zM276.75 382.75h1.5v1.5h-1.5zM288.75 382.75h1.5v1.5h-1.5zM312.75 382.75h1.5v1.5h-1.5zM324.75 382.75h1.5v1.5h-1.5zM336.75 382.75h1.5v1.5h-1.5zM348.75 382.75h1.5v1.5h-1.5zM372.75 382.75h1.5v1.5h-1.5zM384.75 382.75h1.5v1.5h-1.5zM396.75 382.75h1.5v1.5h-1.5zM408.75 382.75h1.5v1.5h-1.5zM432.75 382.75h1.5v1.5h-1.5zM444.75 382.75h1.5v1.5h-1.5zM456.75 382.75h1.5v1.5h-1.5zM468.75 382.75h1.5v1.5h-1.5zM492.75 382.75h1.5v1.5h-1.5zM504.75 382.75h1.5v1.5h-1.5zM516.75 382.75h1.5v1.5h-1.5zM528.75 382.75h1.5v1.5h-1.5zM552.75 382.75h1.5v1.5h-1.5zM564.75 382.75h1.5v1.5h-1.5zM576.75 382.75h1.5v1.5h-1.5zM588.75 382.75h1.5v1.5h-1.5zM612.75 382.75h1.5v1.5h-1.5zM624.75 382.75h1.5v1.5h-1.5zM636.75 382.75h1.5v1.5h-1.5zM648.75 382.75h1.5v1.5h-1.5zM672.75 382.75h1.5v1.5h-1.5zM684.75 382.75h1.5v1.5h-1.5zM696.75 382.75h1.5v1.5h-1.5zM708.75 382.75h1.5v1.5h-1.5zM732.75 382.75h1.5v1.5h-1.5zM744.75 382.75h1.5v1.5h-1.5zM756.75 382.75h1.5v1.5h-1.5zM768.75 382.75h1.5v1.5h-1.5zM792.75 382.75h1.5v1.5h-1.5zM804.75 382.75h1.5v1.5h-1.5zM816.75 382.75h1.5v1.5h-1.5zM828.75 382.75h1.5v1.5h-1.5zM852.75 382.75h1.5v1.5h-1.5zM864.75 382.75h1.5v1.5h-1.5zM876.75 382.75h1.5v1.5h-1.5zM888.75 382.75h1.5v1.5h-1.5zM912.75 382.75h1.5v1.5h-1.5zM924.75 382.75h1.5v1.5h-1.5zM36.75 442.75h1.5v1.5h-1.5zM48.75 442.75h1.5v1.5h-1.5zM72.75 442.75h1.5v1.5h-1.5zM84.75 442.75h1.5v1.5h-1.5zM96.75 442.75h1.5v1.5h-1.5zM108.75 442.75h1.5v1.5h-1.5zM132.75 442.75h1.5v1.5h-1.5zM144.75 442.75h1.5v1.5h-1.5zM156.75 442.75h1.5v1.5h-1.5zM168.75 442.75h1.5v1.5h-1.5zM192.75 442.75h1.5v1.5h-1.5zM204.75 442.75h1.5v1.5h-1.5zM216.75 442.75h1.5v1.5h-1.5zM228.75 442.75h1.5v1.5h-1.5zM252.75 442.75h1.5v1.5h-1.5zM264.75 442.75h1.5v1.5h-1.5zM276.75 442.75h1.5v1.5h-1.5zM288.75 442.75h1.5v1.5h-1.5zM312.75 442.75h1.5v1.5h-1.5zM324.75 442.75h1.5v1.5h-1.5zM336.75 442.75h1.5v1.5h-1.5zM348.75 442.75h1.5v1.5h-1.5zM372.75 442.75h1.5v1.5h-1.5zM384.75 442.75h1.5v1.5h-1.5zM396.75 442.75h1.5v1.5h-1.5zM408.75 442.75h1.5v1.5h-1.5zM432.75 442.75h1.5v1.5h-1.5zM444.75 442.75h1.5v1.5h-1.5zM456.75 442.75h1.5v1.5h-1.5zM468.75 442.75h1.5v1.5h-1.5zM492.75 442.75h1.5v1.5h-1.5zM504.75 442.75h1.5v1.5h-1.5zM516.75 442.75h1.5v1.5h-1.5zM528.75 442.75h1.5v1.5h-1.5zM552.75 442.75h1.5v1.5h-1.5zM564.75 442.75h1.5v1.5h-1.5zM576.75 442.75h1.5v1.5h-1.5zM588.75 442.75h1.5v1.5h-1.5zM612.75 442.75h1.5v1.5h-1.5zM624.75 442.75h1.5v1.5h-1.5zM636.75 442.75h1.5v1.5h-1.5zM648.75 442.75h1.5v1.5h-1.5zM672.75 442.75h1.5v1.5h-1.5zM684.75 442.75h1.5v1.5h-1.5zM696.75 442.75h1.5v1.5h-1.5zM708.75 442.75h1.5v1.5h-1.5zM732.75 442.75h1.5v1.5h-1.5zM744.75 442.75h1.5v1.5h-1.5zM756.75 442.75h1.5v1.5h-1.5zM768.75 442.75h1.5v1.5h-1.5zM792.75 442.75h1.5v1.5h-1.5zM804.75 442.75h1.5v1.5h-1.5zM816.75 442.75h1.5v1.5h-1.5zM828.75 442.75h1.5v1.5h-1.5zM852.75 442.75h1.5v1.5h-1.5zM864.75 442.75h1.5v1.5h-1.5zM876.75 442.75h1.5v1.5h-1.5zM888.75 442.75h1.5v1.5h-1.5zM912.75 442.75h1.5v1.5h-1.5zM924.75 442.75h1.5v1.5h-1.5zM36.75 502.75h1.5v1.5h-1.5zM48.75 502.75h1.5v1.5h-1.5zM72.75 502.75h1.5v1.5h-1.5zM84.75 502.75h1.5v1.5h-1.5zM96.75 502.75h1.5v1.5h-1.5zM108.75 502.75h1.5v1.5h-1.5zM132.75 502.75h1.5v1.5h-1.5zM144.75 502.75h1.5v1.5h-1.5zM156.75 502.75h1.5v1.5h-1.5zM168.75 502.75h1.5v1.5h-1.5zM192.75 502.75h1.5v1.5h-1.5zM204.75 502.75h1.5v1.5h-1.5zM216.75 502.75h1.5v1.5h-1.5zM228.75 502.75h1.5v1.5h-1.5zM252.75 502.75h1.5v1.5h-1.5zM264.75 502.75h1.5v1.5h-1.5zM276.75 502.75h1.5v1.5h-1.5zM288.75 502.75h1.5v1.5h-1.5zM312.75 502.75h1.5v1.5h-1.5zM324.75 502.75h1.5v1.5h-1.5zM336.75 502.75h1.5v1.5h-1.5zM348.75 502.75h1.5v1.5h-1.5zM372.75 502.75h1.5v1.5h-1.5zM384.75 502.75h1.5v1.5h-1.5zM396.75 502.75h1.5v1.5h-1.5zM408.75 502.75h1.5v1.5h-1.5zM432.75 502.75h1.5v1.5h-1.5zM444.75 502.75h1.5v1.5h-1.5zM456.75 502.75h1.5v1.5h-1.5zM468.75 502.75h1.5v1.5h-1.5zM492.75 502.75h1.5v1.5h-1.5zM504.75 502.75h1.5v1.5h-1.5zM516.75 502.75h1.5v1.5h-1.5zM528.75 502.75h1.5v1.5h-1.5zM552.75 502.75h1.5v1.5h-1.5zM564.75 502.75h1.5v1.5h-1.5zM576.75 502.75h1.5v1.5h-1.5zM588.75 502.75h1.5v1.5h-1.5zM612.75 502.75h1.5v1.5h-1.5zM624.75 502.75h1.5v1.5h-1.5zM636.75 502.75h1.5v1.5h-1.5zM648.75 502.75h1.5v1.5h-1.5zM672.75 502.75h1.5v1.5h-1.5zM684.75 502.75h1.5v1.5h-1.5zM696.75 502.75h1.5v1.5h-1.5zM708.75 502.75h1.5v1.5h-1.5zM732.75 502.75h1.5v1.5h-1.5zM744.75 502.75h1.5v1.5h-1.5zM756.75 502.75h1.5v1.5h-1.5zM768.75 502.75h1.5v1.5h-1.5zM792.75 502.75h1.5v1.5h-1.5zM804.75 502.75h1.5v1.5h-1.5zM816.75 502.75h1.5v1.5h-1.5zM828.75 502.75h1.5v1.5h-1.5zM852.75 502.75h1.5v1.5h-1.5zM864.75 502.75h1.5v1.5h-1.5zM876.75 502.75h1.5v1.5h-1.5zM888.75 502.75h1.5v1.5h-1.5zM912.75 502.75h1.5v1.5h-1.5zM924.75 502.75h1.5v1.5h-1.5zM36.75 562.75h1.5v1.5h-1.5zM48.75 562.75h1.5v1.5h-1.5zM72.75 562.75h1.5v1.5h-1.5zM84.75 562.75h1.5v1.5h-1.5zM96.75 562.75h1.5v1.5h-1.5zM108.75 562.75h1.5v1.5h-1.5zM132.75 562.75h1.5v1.5h-1.5zM144.75 562.75h1.5v1.5h-1.5zM156.75 562.75h1.5v1.5h-1.5zM168.75 562.75h1.5v1.5h-1.5zM192.75 562.75h1.5v1.5h-1.5zM204.75 562.75h1.5v1.5h-1.5zM216.75 562.75h1.5v1.5h-1.5zM228.75 562.75h1.5v1.5h-1.5zM252.75 562.75h1.5v1.5h-1.5zM264.75 562.75h1.5v1.5h-1.5zM276.75 562.75h1.5v1.5h-1.5zM288.75 562.75h1.5v1.5h-1.5zM312.75 562.75h1.5v1.5h-1.5zM324.75 562.75h1.5v1.5h-1.5zM336.75 562.75h1.5v1.5h-1.5zM348.75 562.75h1.5v1.5h-1.5zM372.75 562.75h1.5v1.5h-1.5zM384.75 562.75h1.5v1.5h-1.5zM396.75 562.75h1.5v1.5h-1.5zM408.75 562.75h1.5v1.5h-1.5zM432.75 562.75h1.5v1.5h-1.5zM444.75 562.75h1.5v1.5h-1.5zM456.75 562.75h1.5v1.5h-1.5zM468.75 562.75h1.5v1.5h-1.5zM492.75 562.75h1.5v1.5h-1.5zM504.75 562.75h1.5v1.5h-1.5zM516.75 562.75h1.5v1.5h-1.5zM528.75 562.75h1.5v1.5h-1.5zM552.75 562.75h1.5v1.5h-1.5zM564.75 562.75h1.5v1.5h-1.5zM576.75 562.75h1.5v1.5h-1.5zM588.75 562.75h1.5v1.5h-1.5zM612.75 562.75h1.5v1.5h-1.5zM624.75 562.75h1.5v1.5h-1.5zM636.75 562.75h1.5v1.5h-1.5zM648.75 562.75h1.5v1.5h-1.5zM672.75 562.75h1.5v1.5h-1.5zM684.75 562.75h1.5v1.5h-1.5zM696.75 562.75h1.5v1.5h-1.5zM708.75 562.75h1.5v1.5h-1.5zM732.75 562.75h1.5v1.5h-1.5zM744.75 562.75h1.5v1.5h-1.5zM756.75 562.75h1.5v1.5h-1.5zM768.75 562.75h1.5v1.5h-1.5zM792.75 562.75h1.5v1.5h-1.5zM804.75 562.75h1.5v1.5h-1.5zM816.75 562.75h1.5v1.5h-1.5zM828.75 562.75h1.5v1.5h-1.5zM852.75 562.75h1.5v1.5h-1.5zM864.75 562.75h1.5v1.5h-1.5zM876.75 562.75h1.5v1.5h-1.5zM888.75 562.75h1.5v1.5h-1.5zM912.75 562.75h1.5v1.5h-1.5zM924.75 562.75h1.5v1.5h-1.5z" fill="#a8a8a8"/><path d="M480 35h4v1.5h-4zM480 47h4v1.5h-4zM480 59h4v1.5h-4zM480 71h4v1.5h-4zM480 83h4v1.5h-4zM480 95h4v1.5h-4zM480 107h4v1.5h-4zM480 119h4v1.5h-4zM480 131h4v1.5h-4zM480 143h4v1.5h-4zM480 155h4v1.5h-4zM480 167h4v1.5h-4zM480 179h4v1.5h-4zM480 191h4v1.5h-4zM480 203h4v1.5h-4zM480 215h4v1.5h-4zM480 227h4v1.5h-4zM480 239h4v1.5h-4zM480 251h4v1.5h-4zM480 263h4v1.5h-4zM480 275h4v1.5h-4zM480 287h4v1.5h-4zM480 299h4v1.5h-4zM480 311h4v1.5h-4zM480 335h4v1.5h-4zM480 347h4v1.5h-4zM480 359h4v1.5h-4zM480 371h4v1.5h-4zM480 383h4v1.5h-4zM480 395h4v1.5h-4zM480 407h4v1.5h-4zM480 419h4v1.5h-4zM480 431h4v1.5h-4zM480 443h4v1.5h-4zM480 455h4v1.5h-4zM480 467h4v1.5h-4zM480 479h4v1.5h-4zM480 491h4v1.5h-4zM480 503h4v1.5h-4zM480 515h4v1.5h-4zM480 527h4v1.5h-4zM480 539h4v1.5h-4zM480 551h4v1.5h-4zM480 563h4v1.5h-4zM480 575h4v1.5h-4zM480 587h4v1.5h-4zM480 599h4v1.5h-4zM480 611h4v1.5h-4zM36.75 322h1.5v4h-1.5zM48.75 322h1.5v4h-1.5zM60.75 322h1.5v4h-1.5zM72.75 322h1.5v4h-1.5zM84.75 322h1.5v4h-1.5zM96.75 322h1.5v4h-1.5zM108.75 322h1.5v4h-1.5zM120.75 322h1.5v4h-1.5zM132.75 322h1.5v4h-1.5zM144.75 322h1.5v4h-1.5zM156.75 322h1.5v4h-1.5zM168.75 322h1.5v4h-1.5zM180.75 322h1.5v4h-1.5zM192.75 322h1.5v4h-1.5zM204.75 322h1.5v4h-1.5zM216.75 322h1.5v4h-1.5zM228.75 322h1.5v4h-1.5zM240.75 322h1.5v4h-1.5zM252.75 322h1.5v4h-1.5zM264.75 322h1.5v4h-1.5zM276.75 322h1.5v4h-1.5zM288.75 322h1.5v4h-1.5zM300.75 322h1.5v4h-1.5zM312.75 322h1.5v4h-1.5zM324.75 322h1.5v4h-1.5zM336.75 322h1.5v4h-1.5zM348.75 322h1.5v4h-1.5zM360.75 322h1.5v4h-1.5zM372.75 322h1.5v4h-1.5zM384.75 322h1.5v4h-1.5zM396.75 322h1.5v4h-1.5zM408.75 322h1.5v4h-1.5zM420.75 322h1.5v4h-1.5zM432.75 322h1.5v4h-1.5zM444.75 322h1.5v4h-1.5zM456.75 322h1.5v4h-1.5zM468.75 322h1.5v4h-1.5zM492.75 322h1.5v4h-1.5zM504.75 322h1.5v4h-1.5zM516.75 322h1.5v4h-1.5zM528.75 322h1.5v4h-1.5zM540.75 322h1.5v4h-1.5zM552.75 322h1.5v4h-1.5zM564.75 322h1.5v4h-1.5zM576.75 322h1.5v4h-1.5zM588.75 322h1.5v4h-1.5zM600.75 322h1.5v4h-1.5zM612.75 322h1.5v4h-1.5zM624.75 322h1.5v4h-1.5zM636.75 322h1.5v4h-1.5zM648.75 322h1.5v4h-1.5zM660.75 322h1.5v4h-1.5zM672.75 322h1.5v4h-1.5zM684.75 322h1.5v4h-1.5zM696.75 322h1.5v4h-1.5zM708.75 322h1.5v4h-1.5zM720.75 322h1.5v4h-1.5zM732.75 322h1.5v4h-1.5zM744.75 322h1.5v4h-1.5zM756.75 322h1.5v4h-1.5zM768.75 322h1.5v4h-1.5zM780.75 322h1.5v4h-1.5zM792.75 322h1.5v4h-1.5zM804.75 322h1.5v4h-1.5zM816.75 322h1.5v4h-1.5zM828.75 322h1.5v4h-1.5zM840.75 322h1.5v4h-1.5zM852.75 322h1.5v4h-1.5zM864.75 322h1.5v4h-1.5zM876.75 322h1.5v4h-1.5zM888.75 322h1.5v4h-1.5zM900.75 322h1.5v4h-1.5zM912.75 322h1.5v4h-1.5zM924.75 322h1.5v4h-1.5zM479 323h5v1.5h-5zM481 321h1.5v5h-1.5zM775 323h13v1.5h-13zM781 317h1.5v13h-1.5z" fill="#e0e0e0"/><path d="M36.75 25h1.5v2.5h-1.5zM36.75 618.5h1.5v2.5h-1.5zM48.75 25h1.5v2.5h-1.5zM48.75 618.5h1.5v2.5h-1.5zM60.75 25h1.5v6h-1.5zM60.75 615h1.5v6h-1.5zM72.75 25h1.5v2.5h-1.5zM72.75 618.5h1.5v2.5h-1.5zM84.75 25h1.5v2.5h-1.5zM84.75 618.5h1.5v2.5h-1.5zM96.75 25h1.5v2.5h-1.5zM96.75 618.5h1.5v2.5h-1.5zM108.75 25h1.5v2.5h-1.5zM108.75 618.5h1.5v2.5h-1.5zM120.75 25h1.5v6h-1.5zM120.75 615h1.5v6h-1.5zM132.75 25h1.5v2.5h-1.5zM132.75 618.5h1.5v2.5h-1.5zM144.75 25h1.5v2.5h-1.5zM144.75 618.5h1.5v2.5h-1.5zM156.75 25h1.5v2.5h-1.5zM156.75 618.5h1.5v2.5h-1.5zM168.75 25h1.5v2.5h-1.5zM168.75 618.5h1.5v2.5h-1.5zM180.75 25h1.5v6h-1.5zM180.75 615h1.5v6h-1.5zM192.75 25h1.5v2.5h-1.5zM192.75 618.5h1.5v2.5h-1.5zM204.75 25h1.5v2.5h-1.5zM204.75 618.5h1.5v2.5h-1.5zM216.75 25h1.5v2.5h-1.5zM216.75 618.5h1.5v2.5h-1.5zM228.75 25h1.5v2.5h-1.5zM228.75 618.5h1.5v2.5h-1.5zM240.75 25h1.5v6h-1.5zM240.75 615h1.5v6h-1.5zM252.75 25h1.5v2.5h-1.5zM252.75 618.5h1.5v2.5h-1.5zM264.75 25h1.5v2.5h-1.5zM264.75 618.5h1.5v2.5h-1.5zM276.75 25h1.5v2.5h-1.5zM276.75 618.5h1.5v2.5h-1.5zM288.75 25h1.5v2.5h-1.5zM288.75 618.5h1.5v2.5h-1.5zM300.75 25h1.5v6h-1.5zM300.75 615h1.5v6h-1.5zM312.75 25h1.5v2.5h-1.5zM312.75 618.5h1.5v2.5h-1.5zM324.75 25h1.5v2.5h-1.5zM324.75 618.5h1.5v2.5h-1.5zM336.75 25h1.5v2.5h-1.5zM336.75 618.5h1.5v2.5h-1.5zM348.75 25h1.5v2.5h-1.5zM348.75 618.5h1.5v2.5h-1.5zM360.75 25h1.5v6h-1.5zM360.75 615h1.5v6h-1.5zM372.75 25h1.5v2.5h-1.5zM372.75 618.5h1.5v2.5h-1.5zM384.75 25h1.5v2.5h-1.5zM384.75 618.5h1.5v2.5h-1.5zM396.75 25h1.5v2.5h-1.5zM396.75 618.5h1.5v2.5h-1.5zM408.75 25h1.5v2.5h-1.5zM408.75 618.5h1.5v2.5h-1.5zM420.75 25h1.5v6h-1.5zM420.75 615h1.5v6h-1.5zM432.75 25h1.5v2.5h-1.5zM432.75 618.5h1.5v2.5h-1.5zM444.75 25h1.5v2.5h-1.5zM444.75 618.5h1.5v2.5h-1.5zM456.75 25h1.5v2.5h-1.5zM456.75 618.5h1.5v2.5h-1.5zM468.75 25h1.5v2.5h-1.5zM468.75 618.5h1.5v2.5h-1.5zM480.75 25h1.5v6h-1.5zM480.75 615h1.5v6h-1.5zM492.75 25h1.5v2.5h-1.5zM492.75 618.5h1.5v2.5h-1.5zM504.75 25h1.5v2.5h-1.5zM504.75 618.5h1.5v2.5h-1.5zM516.75 25h1.5v2.5h-1.5zM516.75 618.5h1.5v2.5h-1.5zM528.75 25h1.5v2.5h-1.5zM528.75 618.5h1.5v2.5h-1.5zM540.75 25h1.5v6h-1.5zM540.75 615h1.5v6h-1.5zM552.75 25h1.5v2.5h-1.5zM552.75 618.5h1.5v2.5h-1.5zM564.75 25h1.5v2.5h-1.5zM564.75 618.5h1.5v2.5h-1.5zM576.75 25h1.5v2.5h-1.5zM576.75 618.5h1.5v2.5h-1.5zM588.75 25h1.5v2.5h-1.5zM588.75 618.5h1.5v2.5h-1.5zM600.75 25h1.5v6h-1.5zM600.75 615h1.5v6h-1.5zM612.75 25h1.5v2.5h-1.5zM612.75 618.5h1.5v2.5h-1.5zM624.75 25h1.5v2.5h-1.5zM624.75 618.5h1.5v2.5h-1.5zM636.75 25h1.5v2.5h-1.5zM636.75 618.5h1.5v2.5h-1.5zM648.75 25h1.5v2.5h-1.5zM648.75 618.5h1.5v2.5h-1.5zM660.75 25h1.5v6h-1.5zM660.75 615h1.5v6h-1.5zM672.75 25h1.5v2.5h-1.5zM672.75 618.5h1.5v2.5h-1.5zM684.75 25h1.5v2.5h-1.5zM684.75 618.5h1.5v2.5h-1.5zM696.75 25h1.5v2.5h-1.5zM696.75 618.5h1.5v2.5h-1.5zM708.75 25h1.5v2.5h-1.5zM708.75 618.5h1.5v2.5h-1.5zM720.75 25h1.5v6h-1.5zM720.75 615h1.5v6h-1.5zM732.75 25h1.5v2.5h-1.5zM732.75 618.5h1.5v2.5h-1.5zM744.75 25h1.5v2.5h-1.5zM744.75 618.5h1.5v2.5h-1.5zM756.75 25h1.5v2.5h-1.5zM756.75 618.5h1.5v2.5h-1.5zM768.75 25h1.5v2.5h-1.5zM768.75 618.5h1.5v2.5h-1.5zM780.75 25h1.5v6h-1.5zM780.75 615h1.5v6h-1.5zM792.75 25h1.5v2.5h-1.5zM792.75 618.5h1.5v2.5h-1.5zM804.75 25h1.5v2.5h-1.5zM804.75 618.5h1.5v2.5h-1.5zM816.75 25h1.5v2.5h-1.5zM816.75 618.5h1.5v2.5h-1.5zM828.75 25h1.5v2.5h-1.5zM828.75 618.5h1.5v2.5h-1.5zM840.75 25h1.5v6h-1.5zM840.75 615h1.5v6h-1.5zM852.75 25h1.5v2.5h-1.5zM852.75 618.5h1.5v2.5h-1.5zM864.75 25h1.5v2.5h-1.5zM864.75 618.5h1.5v2.5h-1.5zM876.75 25h1.5v2.5h-1.5zM876.75 618.5h1.5v2.5h-1.5zM888.75 25h1.5v2.5h-1.5zM888.75 618.5h1.5v2.5h-1.5zM900.75 25h1.5v6h-1.5zM900.75 615h1.5v6h-1.5zM912.75 25h1.5v2.5h-1.5zM912.75 618.5h1.5v2.5h-1.5zM924.75 25h1.5v2.5h-1.5zM924.75 618.5h1.5v2.5h-1.5zM26 34.75h4v1.5h-4zM930 34.75h4v1.5h-4zM26 46.75h4v1.5h-4zM930 46.75h4v1.5h-4zM26 58.75h4v1.5h-4zM930 58.75h4v1.5h-4zM26 70.75h4v1.5h-4zM930 70.75h4v1.5h-4zM26 82.75h6v1.5h-6zM928 82.75h6v1.5h-6zM26 94.75h4v1.5h-4zM930 94.75h4v1.5h-4zM26 106.75h4v1.5h-4zM930 106.75h4v1.5h-4zM26 118.75h4v1.5h-4zM930 118.75h4v1.5h-4zM26 130.75h4v1.5h-4zM930 130.75h4v1.5h-4zM26 142.75h6v1.5h-6zM928 142.75h6v1.5h-6zM26 154.75h4v1.5h-4zM930 154.75h4v1.5h-4zM26 166.75h4v1.5h-4zM930 166.75h4v1.5h-4zM26 178.75h4v1.5h-4zM930 178.75h4v1.5h-4zM26 190.75h4v1.5h-4zM930 190.75h4v1.5h-4zM26 202.75h6v1.5h-6zM928 202.75h6v1.5h-6zM26 214.75h4v1.5h-4zM930 214.75h4v1.5h-4zM26 226.75h4v1.5h-4zM930 226.75h4v1.5h-4zM26 238.75h4v1.5h-4zM930 238.75h4v1.5h-4zM26 250.75h4v1.5h-4zM930 250.75h4v1.5h-4zM26 262.75h6v1.5h-6zM928 262.75h6v1.5h-6zM26 274.75h4v1.5h-4zM930 274.75h4v1.5h-4zM26 286.75h4v1.5h-4zM930 286.75h4v1.5h-4zM26 298.75h4v1.5h-4zM930 298.75h4v1.5h-4zM26 310.75h4v1.5h-4zM930 310.75h4v1.5h-4zM26 322.75h6v1.5h-6zM928 322.75h6v1.5h-6zM26 334.75h4v1.5h-4zM930 334.75h4v1.5h-4zM26 346.75h4v1.5h-4zM930 346.75h4v1.5h-4zM26 358.75h4v1.5h-4zM930 358.75h4v1.5h-4zM26 370.75h4v1.5h-4zM930 370.75h4v1.5h-4zM26 382.75h6v1.5h-6zM928 382.75h6v1.5h-6zM26 394.75h4v1.5h-4zM930 394.75h4v1.5h-4zM26 406.75h4v1.5h-4zM930 406.75h4v1.5h-4zM26 418.75h4v1.5h-4zM930 418.75h4v1.5h-4zM26 430.75h4v1.5h-4zM930 430.75h4v1.5h-4zM26 442.75h6v1.5h-6zM928 442.75h6v1.5h-6zM26 454.75h4v1.5h-4zM930 454.75h4v1.5h-4zM26 466.75h4v1.5h-4zM930 466.75h4v1.5h-4zM26 478.75h4v1.5h-4zM930 478.75h4v1.5h-4zM26 490.75h4v1.5h-4zM930 490.75h4v1.5h-4zM26 502.75h6v1.5h-6zM928 502.75h6v1.5h-6zM26 514.75h4v1.5h-4zM930 514.75h4v1.5h-4zM26 526.75h4v1.5h-4zM930 526.75h4v1.5h-4zM26 538.75h4v1.5h-4zM930 538.75h4v1.5h-4zM26 550.75h4v1.5h-4zM930 550.75h4v1.5h-4zM26 562.75h6v1.5h-6zM928 562.75h6v1.5h-6zM26 574.75h4v1.5h-4zM930 574.75h4v1.5h-4zM26 586.75h4v1.5h-4zM930 586.75h4v1.5h-4zM26 598.75h4v1.5h-4zM930 598.75h4v1.5h-4zM26 610.75h4v1.5h-4zM930 610.75h4v1.5h-4z" fill="#f0f0f0"/>
<path d="M26 323h1v3h-1zM27 321h1v5h-1zM28 321h1v5h-1zM29 323h1v3h-1zM30 320h1v6h-1zM31 319h1v7h-1zM32 322h1v4h-1zM33 322h1v6h-1zM34 322h1v4h-1zM35 322h1v4h-1zM36 320h1v6h-1zM37 322h1v4h-1zM38 322h1v4h-1zM39 319h1v7h-1zM40 320h1v6h-1zM41 320h1v6h-1zM42 322h1v5h-1zM43 322h1v4h-1zM44 322h1v4h-1zM45 322h1v4h-1zM46 322h1v4h-1zM47 320h1v6h-1zM48 323h1v3h-1zM49 322h1v4h-1zM50 321h1v5h-1zM51 322h1v4h-1zM52 322h1v4h-1zM53 322h1v4h-1zM54 322h1v4h-1zM55 322h1v4h-1zM56 322h1v4h-1zM57 323h1v3h-1zM58 322h1v5h-1zM59 322h1v4h-1zM60 322h1v6h-1zM61 322h1v6h-1zM62 322h1v4h-1zM63 322h1v4h-1zM64 322h1v5h-1zM65 319h1v7h-1zM66 322h1v6h-1zM67 319h1v7h-1zM68 322h1v4h-1zM69 322h1v4h-1zM70 320h1v6h-1zM71 323h1v3h-1zM72 323h1v3h-1zM73 322h1v4h-1zM74 322h1v4h-1zM75 321h1v5h-1zM76 322h1v4h-1zM77 322h1v4h-1zM78 322h1v4h-1zM79 320h1v6h-1zM80 322h1v4h-1zM81 322h1v4h-1zM82 322h1v4h-1zM83 322h1v6h-1zM84 322h1v4h-1zM85 323h1v3h-1zM86 322h1v4h-1zM87 323h1v3h-1zM88 322h1v4h-1zM89 322h1v4h-1zM90 322h1v6h-1zM91 320h1v6h-1zM92 322h1v4h-1zM93 322h1v4h-1zM94 322h1v4h-1zM95 322h1v6h-1zM96 322h1v4h-1zM97 322h1v4h-1zM98 322h1v4h-1zM99 322h1v4h-1zM100 322h1v6h-1zM101 322h1v4h-1zM102 322h1v4h-1zM103 322h1v4h-1zM104 322h1v5h-1zM105 322h1v5h-1zM106 322h1v4h-1zM107 320h1v6h-1zM108 322h1v5h-1zM109 320h1v6h-1zM110 322h1v4h-1zM111 322h1v5h-1zM112 322h1v4h-1zM113 322h1v4h-1zM114 322h1v4h-1zM115 322h1v4h-1zM116 319h1v7h-1zM117 322h1v4h-1zM118 322h1v4h-1zM119 322h1v4h-1zM120 322h1v4h-1zM121 322h1v5h-1zM122 322h1v4h-1zM123 321h1v5h-1zM124 320h1v6h-1zM125 322h1v4h-1zM126 322h1v4h-1zM127 322h1v4h-1zM128 320h1v6h-1zM129 322h1v4h-1zM130 320h1v6h-1zM131 322h1v4h-1zM132 322h1v4h-1zM133 322h1v4h-1zM134 319h1v7h-1zM135 322h1v4h-1zM136 322h1v4h-1zM137 322h1v4h-1zM138 321h1v5h-1zM139 322h1v4h-1zM140 322h1v4h-1zM141 322h1v4h-1zM142 322h1v4h-1zM143 322h1v4h-1zM144 322h1v6h-1zM145 323h1v3h-1zM146 322h1v4h-1zM147 322h1v4h-1zM148 322h1v4h-1zM149 322h1v6h-1zM150 322h1v4h-1zM151 322h1v4h-1zM152 322h1v6h-1zM153 322h1v4h-1zM154 323h1v3h-1zM155 322h1v6h-1zM156 322h1v4h-1zM157 323h1v3h-1zM158 322h1v5h-1zM159 322h1v4h-1zM160 322h1v4h-1zM161 322h1v4h-1zM162 322h1v6h-1zM163 322h1v4h-1zM164 322h1v4h-1zM165 322h1v4h-1zM166 322h1v4h-1zM167 322h1v4h-1zM168 322h1v6h-1zM169 322h1v4h-1zM170 322h1v4h-1zM171 322h1v4h-1zM172 322h1v4h-1zM173 322h1v4h-1zM174 323h1v3h-1zM175 322h1v5h-1zM176 322h1v4h-1zM177 323h1v3h-1zM178 322h1v4h-1zM179 322h1v4h-1zM180 322h1v4h-1zM181 320h1v6h-1zM182 322h1v4h-1zM183 321h1v5h-1zM184 322h1v4h-1zM185 322h1v4h-1zM186 322h1v4h-1zM187 322h1v4h-1zM188 322h1v6h-1zM189 323h1v3h-1zM190 322h1v4h-1zM191 322h1v4h-1zM192 322h1v4h-1zM193 322h1v4h-1zM194 322h1v4h-1zM195 322h1v4h-1zM196 322h1v5h-1zM197 319h1v7h-1zM198 306h1v19h-1zM199 287h1v38h-1zM200 278h1v24h-1zM201 270h1v20h-1zM202 262h1v16h-1zM203 255h1v14h-1zM204 254h1v8h-1zM205 252h1v6h-1zM206 248h1v8h-1zM207 249h1v5h-1zM208 247h1v6h-1zM209 247h1v5h-1zM210 247h1v6h-1zM211 247h1v6h-1zM212 246h1v7h-1zM213 247h1v4h-1zM214 246h1v4h-1zM215 246h1v4h-1zM216 244h1v6h-1zM217 246h1v4h-1zM218 245h1v5h-1zM219 245h1v5h-1zM220 245h1v4h-1zM221 244h1v5h-1zM222 244h1v5h-1zM223 242h1v6h-1zM224 243h1v5h-1zM225 240h1v8h-1zM226 243h1v4h-1zM227 243h1v4h-1zM228 242h1v5h-1zM229 240h1v6h-1zM230 241h1v5h-1zM231 241h1v5h-1zM232 240h1v5h-1zM233 241h1v4h-1zM234 240h1v4h-1zM235 239h1v5h-1zM236 239h1v4h-1zM237 238h1v5h-1zM238 239h1v6h-1zM239 237h1v6h-1zM240 238h1v5h-1zM241 238h1v4h-1zM242 238h1v4h-1zM243 237h1v5h-1zM244 237h1v5h-1zM245 237h1v4h-1zM246 237h1v4h-1zM247 237h1v4h-1zM248 237h1v4h-1zM249 237h1v4h-1zM250 237h1v4h-1zM251 237h1v4h-1zM252 237h1v4h-1zM253 237h1v4h-1zM254 237h1v4h-1zM255 237h1v8h-1zM256 238h1v32h-1zM257 250h1v27h-1zM258 269h1v16h-1zM259 276h1v13h-1zM260 283h1v9h-1zM261 288h1v9h-1zM262 291h1v8h-1zM263 293h1v9h-1zM264 296h1v6h-1zM265 298h1v6h-1zM266 298h1v8h-1zM267 299h1v8h-1zM268 302h1v5h-1zM269 303h1v6h-1zM270 304h1v4h-1zM271 304h1v4h-1zM272 304h1v4h-1zM273 304h1v4h-1zM274 304h1v6h-1zM275 304h1v4h-1zM276 304h1v4h-1zM277 304h1v4h-1zM278 305h1v3h-1zM279 302h1v6h-1zM280 301h1v7h-1zM281 304h1v4h-1zM282 302h1v6h-1zM283 304h1v4h-1zM284 304h1v5h-1zM285 302h1v6h-1zM286 304h1v4h-1zM287 302h1v6h-1zM288 304h1v5h-1zM289 304h1v5h-1zM290 304h1v4h-1zM291 304h1v4h-1zM292 304h1v4h-1zM293 304h1v4h-1zM294 304h1v4h-1zM295 304h1v4h-1zM296 304h1v4h-1zM297 304h1v4h-1zM298 305h1v3h-1zM299 304h1v6h-1zM300 304h1v5h-1zM301 304h1v5h-1zM302 304h1v4h-1zM303 304h1v4h-1zM304 302h1v6h-1zM305 303h1v5h-1zM306 304h1v4h-1zM307 305h1v3h-1zM308 304h1v4h-1zM309 304h1v4h-1zM310 304h1v5h-1zM311 302h1v6h-1zM312 304h1v4h-1zM313 304h1v4h-1zM314 304h1v5h-1zM315 304h1v6h-1zM316 304h1v4h-1zM317 304h1v4h-1zM318 304h1v6h-1zM319 304h1v4h-1zM320 304h1v6h-1zM321 304h1v4h-1zM322 304h1v4h-1zM323 303h1v5h-1zM324 304h1v4h-1zM325 304h1v4h-1zM326 304h1v6h-1zM327 304h1v6h-1zM328 301h1v7h-1zM329 304h1v4h-1zM330 304h1v4h-1zM331 304h1v4h-1zM332 304h1v4h-1zM333 304h1v5h-1zM334 304h1v4h-1zM335 305h1v3h-1zM336 304h1v4h-1zM337 304h1v4h-1zM338 304h1v4h-1zM339 304h1v4h-1zM340 305h1v3h-1zM341 302h1v6h-1zM342 302h1v6h-1zM343 304h1v4h-1zM344 301h1v7h-1zM345 304h1v4h-1zM346 304h1v4h-1zM347 304h1v5h-1zM348 304h1v4h-1zM349 302h1v6h-1zM350 301h1v7h-1zM351 302h1v6h-1zM352 304h1v4h-1zM353 304h1v4h-1zM354 304h1v4h-1zM355 304h1v6h-1zM356 304h1v5h-1zM357 301h1v7h-1zM358 302h1v6h-1zM359 304h1v4h-1zM360 304h1v6h-1zM361 304h1v4h-1zM362 303h1v5h-1zM363 303h1v5h-1zM364 304h1v4h-1zM365 304h1v6h-1zM366 304h1v6h-1zM367 304h1v4h-1zM368 304h1v4h-1zM369 301h1v7h-1zM370 304h1v4h-1zM371 304h1v4h-1zM372 304h1v4h-1zM373 304h1v6h-1zM374 304h1v4h-1zM375 301h1v7h-1zM376 304h1v4h-1zM377 304h1v4h-1zM378 303h1v5h-1zM379 304h1v4h-1zM380 304h1v4h-1zM381 304h1v4h-1zM382 304h1v4h-1zM383 304h1v4h-1zM384 304h1v5h-1zM385 302h1v6h-1zM386 304h1v4h-1zM387 305h1v3h-1zM388 304h1v4h-1zM389 303h1v5h-1zM390 304h1v4h-1zM391 304h1v4h-1zM392 304h1v4h-1zM393 303h1v5h-1zM394 304h1v4h-1zM395 304h1v4h-1zM396 304h1v4h-1zM397 304h1v4h-1zM398 301h1v7h-1zM399 304h1v5h-1zM400 304h1v4h-1zM401 304h1v5h-1zM402 304h1v6h-1zM403 304h1v4h-1zM404 304h1v4h-1zM405 304h1v4h-1zM406 304h1v4h-1zM407 304h1v4h-1zM408 304h1v4h-1zM409 304h1v4h-1zM410 304h1v4h-1zM411 302h1v6h-1zM412 305h1v3h-1zM413 304h1v4h-1zM414 304h1v4h-1zM415 304h1v4h-1zM416 301h1v7h-1zM417 302h1v6h-1zM418 304h1v4h-1zM419 302h1v6h-1zM420 304h1v4h-1zM421 304h1v6h-1zM422 304h1v6h-1zM423 304h1v4h-1zM424 302h1v6h-1zM425 304h1v5h-1zM426 304h1v4h-1zM427 301h1v7h-1zM428 301h1v7h-1zM429 304h1v4h-1zM430 304h1v4h-1zM431 304h1v4h-1zM432 304h1v4h-1zM433 303h1v5h-1zM434 302h1v6h-1zM435 304h1v4h-1zM436 302h1v6h-1zM437 304h1v4h-1zM438 304h1v4h-1zM439 304h1v6h-1zM440 304h1v4h-1zM441 301h1v7h-1zM442 304h1v4h-1zM443 304h1v4h-1zM444 304h1v4h-1zM445 304h1v4h-1zM446 305h1v3h-1zM447 302h1v6h-1zM448 302h1v6h-1zM449 304h1v4h-1zM450 302h1v6h-1zM451 304h1v4h-1zM452 304h1v4h-1zM453 304h1v6h-1zM454 301h1v7h-1zM455 304h1v4h-1zM456 304h1v4h-1zM457 305h1v3h-1zM458 304h1v4h-1zM459 304h1v5h-1zM460 304h1v5h-1zM461 304h1v4h-1zM462 304h1v5h-1zM463 304h1v6h-1zM464 304h1v4h-1zM465 304h1v6h-1zM466 304h1v4h-1zM467 304h1v4h-1zM468 301h1v7h-1zM469 304h1v4h-1zM470 304h1v4h-1zM471 304h1v4h-1zM472 304h1v4h-1zM473 301h1v7h-1zM474 304h1v4h-1zM475 304h1v4h-1zM476 304h1v4h-1zM477 304h1v5h-1zM478 304h1v4h-1zM479 304h1v4h-1zM480 304h1v6h-1zM481 305h1v3h-1zM482 304h1v6h-1zM483 304h1v4h-1zM484 304h1v4h-1zM485 304h1v4h-1zM486 304h1v6h-1zM487 304h1v4h-1zM488 304h1v4h-1zM489 304h1v5h-1zM490 301h1v7h-1zM491 304h1v4h-1zM492 304h1v4h-1zM493 305h1v3h-1zM494 304h1v4h-1zM495 304h1v4h-1zM496 304h1v4h-1zM497 304h1v5h-1zM498 305h1v3h-1zM499 302h1v6h-1zM500 305h1v3h-1zM501 304h1v4h-1zM502 304h1v5h-1zM503 304h1v4h-1zM504 304h1v4h-1zM505 304h1v4h-1zM506 304h1v4h-1zM507 305h1v3h-1zM508 305h1v3h-1zM509 302h1v6h-1zM510 304h1v4h-1zM511 305h1v3h-1zM512 304h1v4h-1zM513 304h1v4h-1zM514 304h1v4h-1zM515 304h1v4h-1zM516 302h1v6h-1zM517 304h1v4h-1zM518 304h1v4h-1zM519 304h1v4h-1zM520 304h1v5h-1zM521 301h1v7h-1zM522 304h1v4h-1zM523 304h1v4h-1zM524 304h1v4h-1zM525 304h1v4h-1zM526 301h1v7h-1zM527 304h1v4h-1zM528 304h1v4h-1zM529 304h1v4h-1zM530 304h1v4h-1zM531 304h1v4h-1zM532 304h1v4h-1zM533 304h1v5h-1zM534 304h1v4h-1zM535 304h1v4h-1zM536 304h1v4h-1zM537 304h1v4h-1zM538 304h1v4h-1zM539 304h1v4h-1zM540 304h1v4h-1zM541 304h1v4h-1zM542 302h1v6h-1zM543 304h1v5h-1zM544 304h1v4h-1zM545 304h1v5h-1zM546 304h1v4h-1zM547 303h1v5h-1zM548 300h1v7h-1zM549 296h1v9h-1zM550 292h1v9h-1zM551 292h1v6h-1zM552 290h1v6h-1zM553 289h1v5h-1zM554 287h1v8h-1zM555 284h1v8h-1zM556 286h1v5h-1zM557 285h1v7h-1zM558 284h1v5h-1zM559 284h1v5h-1zM560 283h1v5h-1zM561 283h1v6h-1zM562 279h1v8h-1zM563 282h1v5h-1zM564 281h1v6h-1zM565 281h1v7h-1zM566 280h1v5h-1zM567 278h1v7h-1zM568 279h1v5h-1zM569 279h1v5h-1zM570 278h1v6h-1zM571 278h1v5h-1zM572 277h1v5h-1zM573 278h1v4h-1zM574 277h1v4h-1zM575 274h1v7h-1zM576 276h1v5h-1zM577 276h1v4h-1zM578 276h1v5h-1zM579 275h1v6h-1zM580 275h1v6h-1zM581 275h1v6h-1zM582 271h1v8h-1zM583 274h1v5h-1zM584 274h1v5h-1zM585 274h1v5h-1zM586 274h1v5h-1zM587 272h1v7h-1zM588 274h1v5h-1zM589 273h1v5h-1zM590 274h1v4h-1zM591 273h1v5h-1zM592 274h1v4h-1zM593 274h1v6h-1zM594 274h1v4h-1zM595 274h1v4h-1zM596 274h1v4h-1zM597 274h1v4h-1zM598 274h1v4h-1zM599 275h1v3h-1zM600 274h1v6h-1zM601 274h1v4h-1zM602 271h1v7h-1zM603 274h1v4h-1zM604 274h1v4h-1zM605 274h1v4h-1zM606 273h1v5h-1zM607 274h1v6h-1zM608 274h1v4h-1zM609 274h1v4h-1zM610 274h1v4h-1zM611 274h1v4h-1zM612 274h1v4h-1zM613 274h1v4h-1zM614 274h1v6h-1zM615 271h1v8h-1zM616 274h1v7h-1zM617 274h1v5h-1zM618 274h1v7h-1zM619 274h1v5h-1zM620 274h1v5h-1zM621 274h1v5h-1zM622 274h1v7h-1zM623 274h1v5h-1zM624 273h1v6h-1zM625 274h1v5h-1zM626 275h1v4h-1zM627 273h1v6h-1zM628 275h1v4h-1zM629 275h1v4h-1zM630 276h1v3h-1zM631 275h1v6h-1zM632 273h1v6h-1zM633 275h1v4h-1zM634 275h1v7h-1zM635 275h1v5h-1zM636 275h1v5h-1zM637 276h1v4h-1zM638 276h1v4h-1zM639 274h1v6h-1zM640 273h1v7h-1zM641 276h1v4h-1zM642 276h1v4h-1zM643 276h1v6h-1zM644 276h1v5h-1zM645 273h1v8h-1zM646 276h1v7h-1zM647 277h1v6h-1zM648 277h1v4h-1zM649 277h1v4h-1zM650 278h1v3h-1zM651 277h1v6h-1zM652 277h1v5h-1zM653 277h1v5h-1zM654 277h1v5h-1zM655 278h1v4h-1zM656 275h1v7h-1zM657 277h1v5h-1zM658 278h1v4h-1zM659 278h1v4h-1zM660 278h1v6h-1zM661 278h1v4h-1zM662 278h1v5h-1zM663 278h1v6h-1zM664 278h1v7h-1zM665 279h1v4h-1zM666 279h1v4h-1zM667 279h1v4h-1zM668 279h1v6h-1zM669 279h1v4h-1zM670 279h1v4h-1zM671 279h1v6h-1zM672 279h1v4h-1zM673 279h1v5h-1zM674 277h1v7h-1zM675 279h1v7h-1zM676 280h1v6h-1zM677 280h1v4h-1zM678 280h1v5h-1zM679 280h1v5h-1zM680 278h1v6h-1zM681 281h1v3h-1zM682 280h1v4h-1zM683 280h1v5h-1zM684 280h1v5h-1zM685 280h1v6h-1zM686 280h1v5h-1zM687 281h1v4h-1zM688 278h1v7h-1zM689 281h1v4h-1zM690 281h1v6h-1zM691 281h1v4h-1zM692 279h1v6h-1zM693 281h1v6h-1zM694 281h1v7h-1zM695 281h1v6h-1zM696 282h1v4h-1zM697 281h1v5h-1zM698 282h1v4h-1zM699 282h1v6h-1zM700 282h1v4h-1zM701 280h1v6h-1zM702 282h1v6h-1zM703 283h1v3h-1zM704 280h1v6h-1zM705 280h1v6h-1zM706 282h1v4h-1zM707 282h1v4h-1zM708 282h1v4h-1zM709 283h1v3h-1zM710 282h1v4h-1zM711 281h1v5h-1zM712 282h1v4h-1zM713 282h1v4h-1zM714 281h1v5h-1zM715 282h1v4h-1zM716 282h1v4h-1zM717 281h1v5h-1zM718 282h1v4h-1zM719 282h1v4h-1zM720 282h1v6h-1zM721 282h1v4h-1zM722 282h1v5h-1zM723 280h1v7h-1zM724 282h1v5h-1zM725 280h1v7h-1zM726 282h1v5h-1zM727 282h1v5h-1zM728 282h1v5h-1zM729 282h1v5h-1zM730 282h1v5h-1zM731 281h1v6h-1zM732 282h1v5h-1zM733 282h1v5h-1zM734 282h1v5h-1zM735 283h1v4h-1zM736 283h1v5h-1zM737 281h1v6h-1zM738 283h1v4h-1zM739 283h1v4h-1zM740 281h1v6h-1zM741 283h1v4h-1zM742 283h1v6h-1zM743 283h1v6h-1zM744 283h1v5h-1zM745 280h1v7h-1zM746 283h1v4h-1zM747 283h1v4h-1zM748 283h1v4h-1zM749 283h1v5h-1zM750 283h1v4h-1zM751 283h1v4h-1zM752 280h1v7h-1zM753 281h1v6h-1zM754 283h1v4h-1zM755 283h1v4h-1zM756 283h1v4h-1zM757 283h1v4h-1zM758 283h1v6h-1zM759 283h1v5h-1zM760 281h1v7h-1zM761 283h1v5h-1zM762 281h1v7h-1zM763 284h1v4h-1zM764 284h1v4h-1zM765 284h1v6h-1zM766 284h1v4h-1zM767 284h1v4h-1zM768 284h1v4h-1zM769 285h1v3h-1zM770 284h1v5h-1zM771 284h1v5h-1zM772 284h1v5h-1zM773 285h1v4h-1zM774 285h1v4h-1zM775 285h1v5h-1zM776 285h1v5h-1zM777 285h1v5h-1zM778 286h1v5h-1zM779 286h1v5h-1zM780 284h1v8h-1zM781 287h1v5h-1zM782 288h1v5h-1zM783 288h1v5h-1zM784 289h1v5h-1zM785 289h1v5h-1zM786 290h1v5h-1zM787 290h1v5h-1zM788 289h1v6h-1zM789 291h1v5h-1zM790 289h1v7h-1zM791 292h1v5h-1zM792 293h1v4h-1zM793 291h1v7h-1zM794 292h1v6h-1zM795 294h1v5h-1zM796 295h1v4h-1zM797 292h1v8h-1zM798 296h1v4h-1zM799 296h1v5h-1zM800 296h1v6h-1zM801 297h1v5h-1zM802 298h1v5h-1zM803 299h1v5h-1zM804 299h1v7h-1zM805 300h1v6h-1zM806 301h1v5h-1zM807 301h1v5h-1zM808 302h1v7h-1zM809 303h1v4h-1zM810 303h1v7h-1zM811 303h1v5h-1zM812 304h1v6h-1zM813 301h1v7h-1zM814 304h1v6h-1zM815 304h1v4h-1zM816 304h1v6h-1zM817 302h1v6h-1zM818 304h1v4h-1zM819 304h1v4h-1zM820 304h1v6h-1zM821 304h1v4h-1zM822 304h1v6h-1zM823 303h1v5h-1zM824 304h1v4h-1zM825 305h1v3h-1zM826 304h1v4h-1zM827 304h1v4h-1zM828 304h1v4h-1zM829 304h1v4h-1zM830 301h1v7h-1zM831 304h1v4h-1zM832 305h1v3h-1zM833 305h1v3h-1zM834 305h1v3h-1zM835 302h1v6h-1zM836 304h1v4h-1zM837 304h1v4h-1zM838 304h1v6h-1zM839 304h1v4h-1zM840 304h1v6h-1zM841 304h1v6h-1zM842 304h1v4h-1zM843 304h1v4h-1zM844 304h1v4h-1zM845 304h1v4h-1zM846 304h1v4h-1zM847 304h1v4h-1zM848 304h1v6h-1zM849 304h1v4h-1zM850 304h1v4h-1zM851 304h1v4h-1zM852 304h1v4h-1zM853 302h1v6h-1zM854 304h1v4h-1zM855 303h1v5h-1zM856 302h1v6h-1zM857 304h1v6h-1zM858 305h1v3h-1zM859 304h1v6h-1zM860 304h1v5h-1zM861 304h1v6h-1zM862 304h1v4h-1zM863 303h1v5h-1zM864 304h1v4h-1zM865 304h1v5h-1zM866 304h1v4h-1zM867 302h1v6h-1zM868 304h1v4h-1zM869 304h1v4h-1zM870 304h1v4h-1zM871 304h1v5h-1zM872 302h1v6h-1zM873 304h1v4h-1zM874 304h1v4h-1zM875 304h1v4h-1zM876 304h1v4h-1zM877 304h1v4h-1zM878 304h1v5h-1zM879 303h1v5h-1zM880 304h1v4h-1zM881 304h1v5h-1zM882 304h1v4h-1zM883 302h1v6h-1zM884 302h1v6h-1zM885 304h1v4h-1zM886 304h1v4h-1zM887 304h1v4h-1zM888 304h1v4h-1zM889 304h1v4h-1zM890 304h1v4h-1zM891 303h1v5h-1zM892 304h1v4h-1zM893 304h1v4h-1zM894 304h1v4h-1zM895 304h1v4h-1zM896 305h1v3h-1zM897 304h1v4h-1zM898 304h1v4h-1zM899 301h1v7h-1zM900 304h1v5h-1zM901 304h1v6h-1zM902 302h1v6h-1zM903 304h1v4h-1zM904 304h1v4h-1zM905 304h1v4h-1zM906 304h1v5h-1zM907 304h1v6h-1zM908 304h1v4h-1zM909 304h1v4h-1zM910 304h1v4h-1zM911 304h1v4h-1zM912 304h1v5h-1zM913 303h1v5h-1zM914 304h1v5h-1zM915 304h1v4h-1zM916 304h1v5h-1zM917 304h1v4h-1zM918 305h1v3h-1zM919 304h1v4h-1zM920 305h1v3h-1zM921 304h1v6h-1zM922 304h1v4h-1zM923 304h1v4h-1zM924 304h1v4h-1zM925 304h1v4h-1zM926 304h1v4h-1zM927 304h1v4h-1zM928 303h1v5h-1zM929 304h1v4h-1zM930 304h1v4h-1zM931 304h1v4h-1zM932 304h1v5h-1zM933 304h1v4h-1z" fill="#f2f200"/>
</svg>
<svg width="960" height="30" style="position:absolute;left:0;top:0">
<rect x="312" y="10.5" width="337" height="1.5" fill="#d8d820"/>
<path d="M356 3.5h-2v19.5" fill="none" stroke="#d0d0d0" stroke-width="1.5"/>
<path d="M604 3.5h2v19.5" fill="none" stroke="#d0d0d0" stroke-width="1.5"/>
<path d="M436 3h7v2h-2.5v3h-2v-3h-2.5z" fill="#e020e0"/>
<path d="M676.8 4h15v12.3l-7.5 4l-7.5-4z" fill="#000" stroke="#8434cc" stroke-width="1.8" stroke-linejoin="round"/>
<path d="M679 7.3h10v1.8h-4.1v7.6h-1.8v-7.6h-4.1z" fill="#a040e0"/>
<g>
<path d="M907 6c2-3 7-3 9-1l0.5 3l-3 2l-2 3l-2.5-1.5c-2-2-3-4-2-5.5z" fill="#38b828"/>
<path d="M909 8c1-2 3-3 5-2.5l-3 3z" fill="#70e050"/>
<path d="M909 13l9-4.7l3.3 5.7l-9.3 5.3z" fill="#2848a8"/>
<path d="M911 15.5l7.5-4l1.5 2.5l-7.5 4z" fill="#d0a8b8"/>
<path d="M912 12.5l4-2l1 1.3l-4 2z" fill="#283068"/>
</g>
</svg>
<div class="t" style="left:694px;top:5px;color:#dcdcdc">960.0ms</div>
<div class="t" style="left:831px;top:3px;color:#dcdcdc">1:35</div>

<div class="a" style="left:0;top:624px;width:383px;height:96px;background:#58b0c8"></div>
<div class="a" style="left:383px;top:645.5px;width:574.5px;height:72px;background:#0060a0"></div>
<div class="a" style="left:383px;top:717.5px;width:577px;height:2.5px;background:#0074d0"></div>
<div class="a" style="left:4px;top:645px;width:242px;height:5px;background:#304850"></div>
<div class="pill" style="left:1.5px;top:624px;width:248.5px;height:23px;border-radius:5px"></div>
<div class="pill" style="left:1.5px;top:648px;width:248.5px;height:22.5px;border-radius:5px"></div>
<div class="pill" style="left:253.5px;top:624px;width:126.5px;height:46.5px;border-radius:6px"></div>
<div class="pill" style="left:1.5px;top:673px;width:378.5px;height:44px;border-radius:5px"></div>
<svg width="20" height="20" style="position:absolute;left:2.5px;top:626.5px"><circle cx="9.75" cy="9.75" r="9.75" fill="#f00000"/><path d="M10.2 3.2v12.3M6.8 6.3l3.6-3" stroke="#400000" stroke-width="2.6" fill="none"/></svg>
<div class="c" style="left:2.5px;top:650.5px;width:19.5px;height:19.5px;background:#f0f000;font-size:17px;line-height:19px">2</div>
<div class="c" style="left:2.5px;top:674.5px;width:19.5px;height:19.5px;background:#f0f000;font-size:17px;line-height:19px">2</div>
<div class="c" style="left:2.5px;top:697px;width:19.5px;height:19.5px;background:#f0f000;font-size:17px;line-height:19px">2</div>
<div class="c" style="left:192.5px;top:674.5px;width:19px;height:19px;background:#f0f000;font-size:17px;line-height:19px">2</div>
<div class="c" style="left:192.5px;top:697.5px;width:19px;height:19px;background:#f0f000;font-size:17px;line-height:19px">2</div>
<div class="t" style="left:21px;top:628px;color:#b01010">5V-</div>
<div class="t" style="left:127px;top:628px;color:#b01010">0.00div</div>
<div class="t" style="left:21px;top:652px;color:#d4d438">2V-</div>
<div class="t" style="left:127px;top:652px;color:#d4d438">0.00div</div>
<div class="t" style="left:257px;top:626px;color:#dcdcdc">(1.25KS/s)</div>
<div class="t" style="left:261px;top:650px;color:#dcdcdc">Depth:10K</div>
<div class="t" style="left:25px;top:675px;color:#d4d438">F:  ?</div>
<div class="t" style="left:25px;top:697px;color:#d4d438">+D:17.5%</div>
<div class="t" style="left:217px;top:675.5px;color:#d4d438">Vk:1.054v</div>
<div class="t" style="left:217px;top:698px;color:#d4d438">V:799.1mv</div>
<div class="pill" style="left:383px;top:623px;width:119px;height:22px;border-radius:11px"></div>
<div class="t" style="left:399.5px;top:626px;color:#dcdcdc">M:400ms</div>
<div class="a" style="left:387px;top:649px;width:107px;height:66px;background:#0080e0;border-top:2px solid #58b4fc;border-left:2px solid #58b4fc;border-right:2.5px solid #003088;border-bottom:2.5px solid #003088;box-sizing:border-box;border-radius:3px"></div>
<div class="t" style="left:415.5px;top:659px;color:#002070;-webkit-text-stroke:0.4px #002070">Type</div>
<div class="a" style="left:409px;top:685px;width:60px;height:24px;background:#e4e4e4"></div>
<div class="t" style="left:410px;top:688px;color:#000">Image</div>
<div class="a" style="left:717px;top:649px;width:107px;height:67px;background:#0080e0;border-top:2px solid #58b4fc;border-left:2px solid #58b4fc;border-right:2.5px solid #003088;border-bottom:2.5px solid #003088;box-sizing:border-box;border-radius:3px"></div>
<div class="t" style="left:745px;top:673.5px;color:#002070;-webkit-text-stroke:0.4px #002070">Save</div>
<div class="pill" style="left:798px;top:624px;width:154px;height:21px;border-radius:10.5px"></div>
<svg width="20" height="20" style="position:absolute;left:801px;top:625px"><circle cx="9.75" cy="9.75" r="9.75" fill="#f00000"/><path d="M10.2 3.5v12.5M6.8 6.6l3.6-3" stroke="#400000" stroke-width="2.6" fill="none"/></svg>
<svg width="30" height="22" style="position:absolute;left:820px;top:624px"><path d="M2 18.5h10.5l5.5-15.5h7" fill="none" stroke="#e0e0e0" stroke-width="1.6"/></svg>
<div class="t" style="left:847px;top:626px;color:#dcdcdc">0.00mV</div>
<svg width="30" height="24" style="position:absolute;left:0;top:311px"><path d="M0.8 2h17l5 11l-5 10.5h-17z" fill="#000" stroke="#d8e828" stroke-width="1.5"/></svg>
<div class="t" style="left:4px;top:315px;color:#e8e800">2</div>
</body></html>
